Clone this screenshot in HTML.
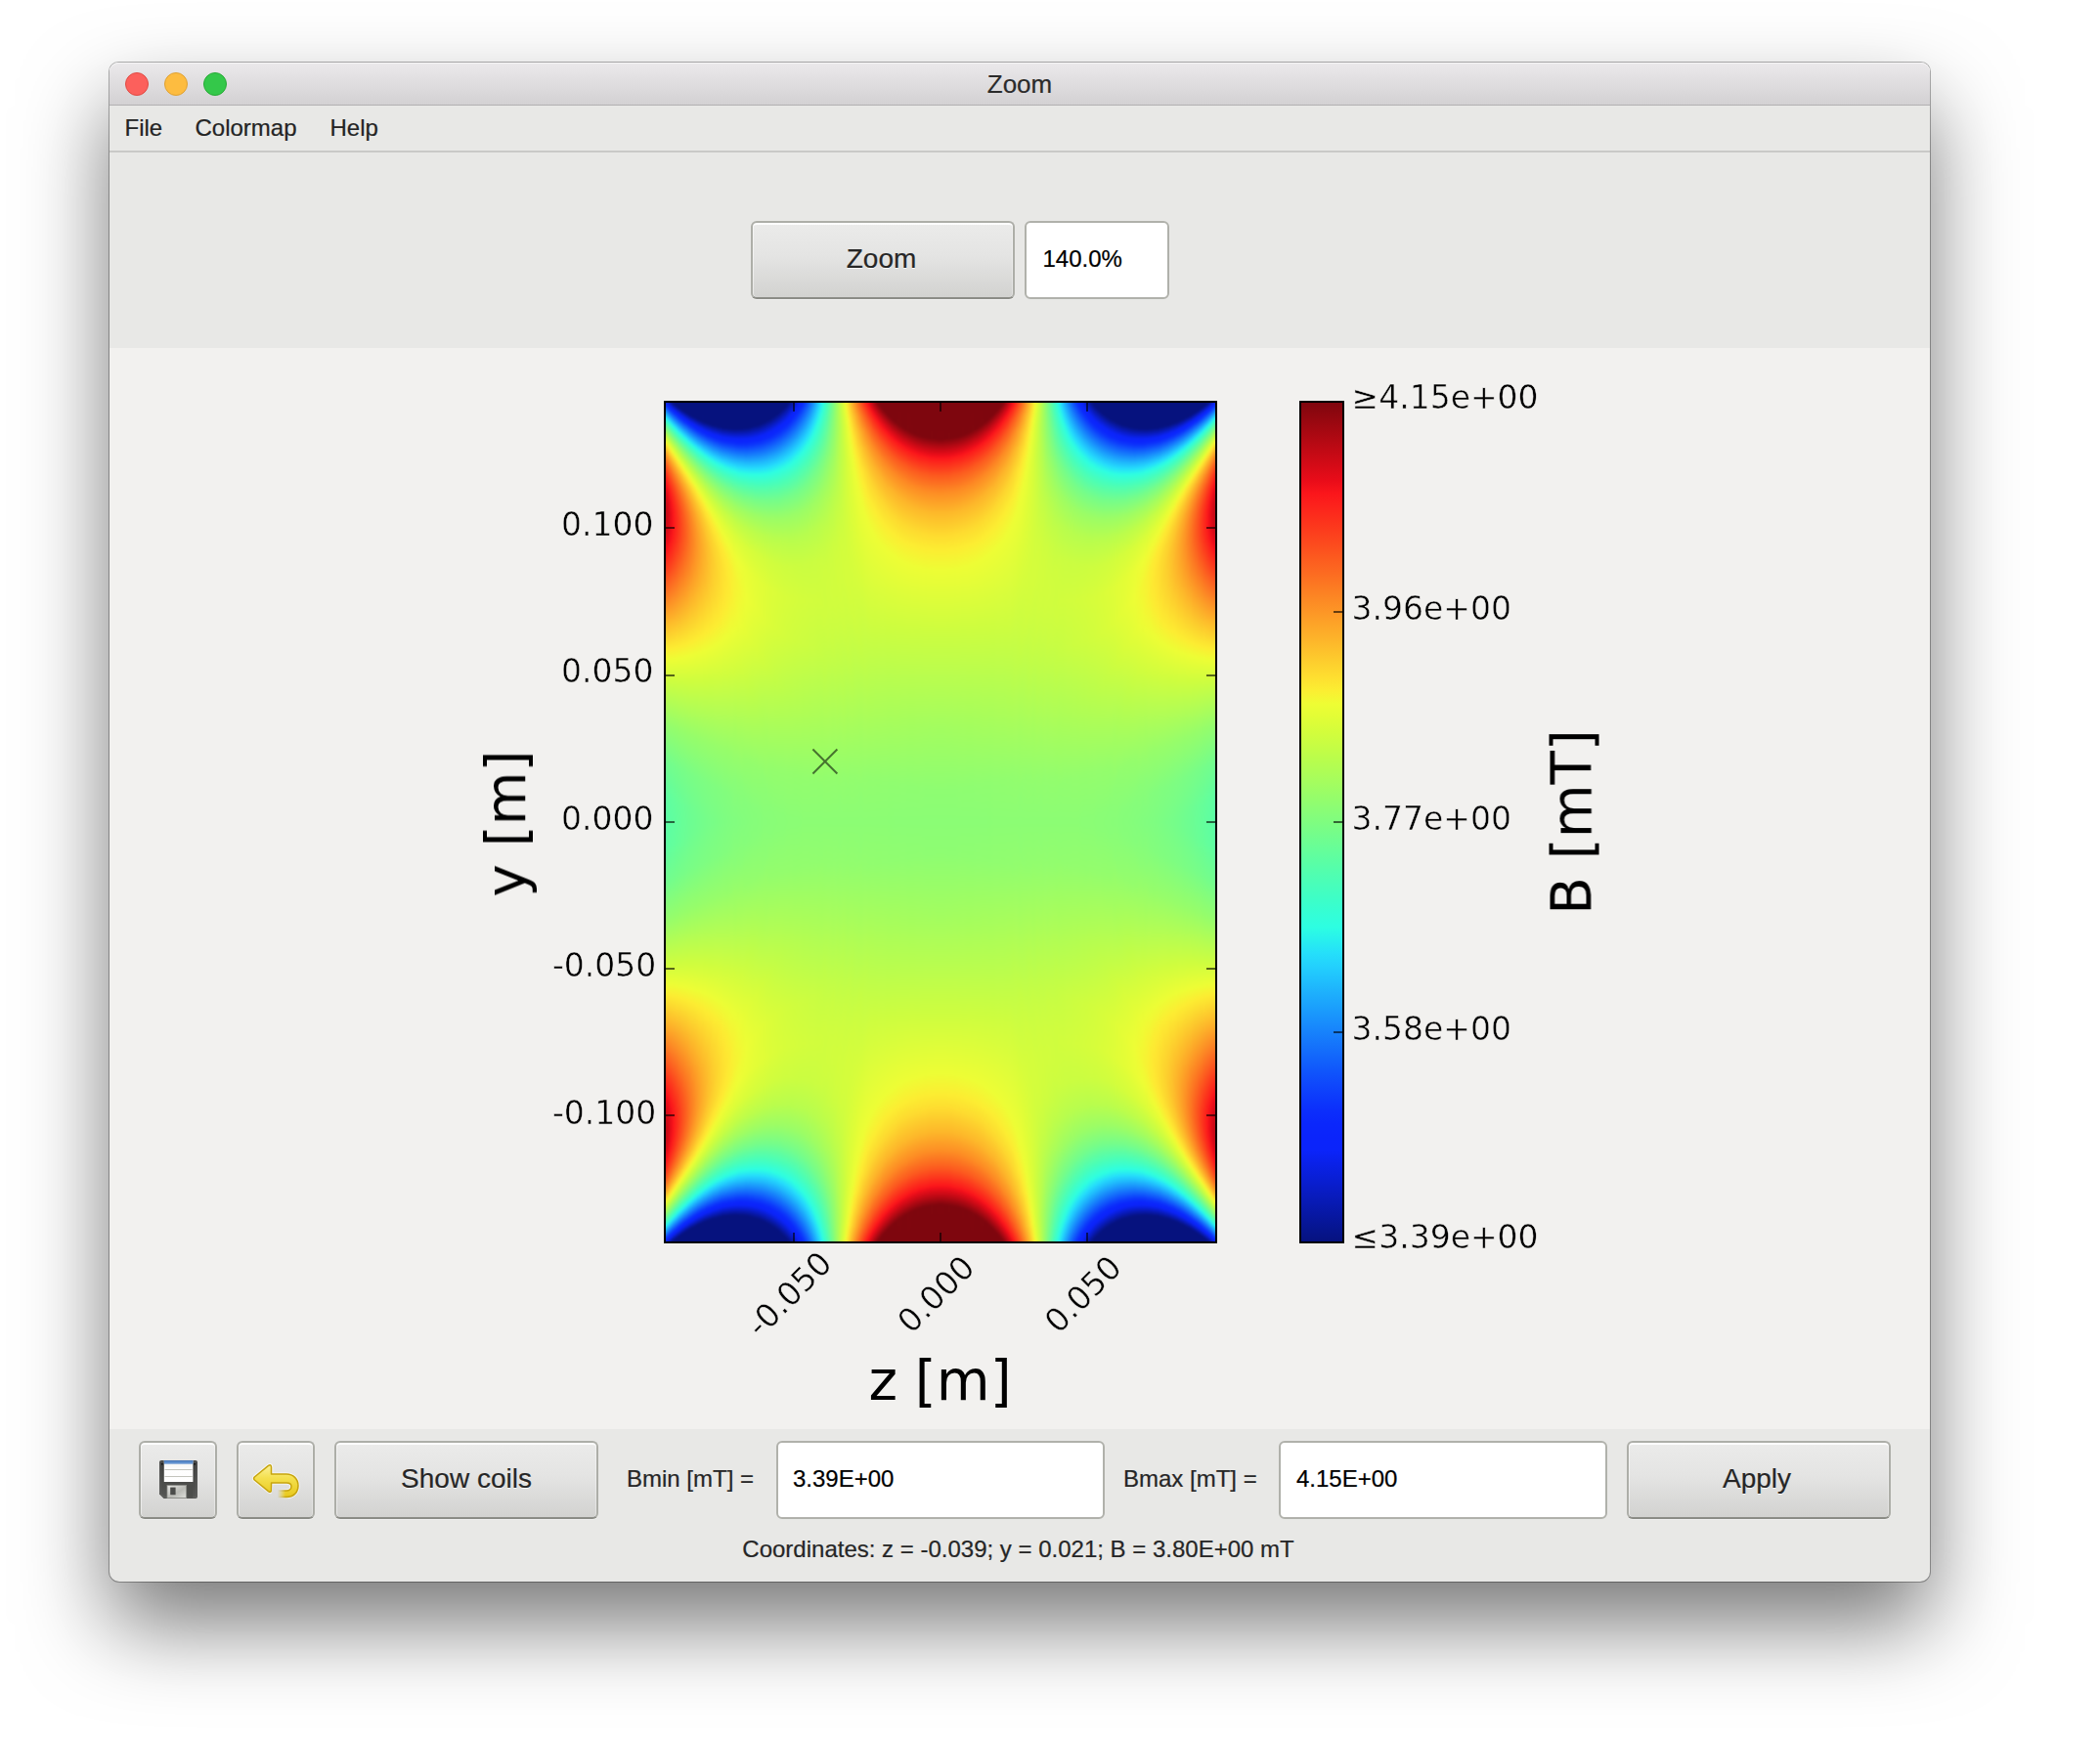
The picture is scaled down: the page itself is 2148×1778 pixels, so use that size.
<!DOCTYPE html><html><head><meta charset="utf-8"><title>Zoom</title><style>
html,body{margin:0;padding:0;background:#fff}
body{-webkit-text-stroke:.22px currentColor;width:2148px;height:1778px;position:relative;overflow:hidden;font-family:"Liberation Sans",sans-serif;color:#262626}
#win{position:absolute;left:112px;top:64px;width:1862px;height:1554px;border-radius:9px 9px 10px 10px;background:#e8e8e6;
 box-shadow:0 0 0 1px rgba(0,0,0,.3),0 44px 88px rgba(0,0,0,.53)}
#tb{position:absolute;left:0;top:0;width:1862px;height:43px;border-radius:9px 9px 0 0;background:linear-gradient(#ebe9eb,#d3d1d3);border-bottom:1px solid #b2b0b2;box-shadow:inset 0 1px 0 #f6f5f6}
#tb .t{position:absolute;left:0;width:1862px;top:7px;text-align:center;font-size:26px;line-height:30px;color:#2b2b2b}
.tl{position:absolute;top:10px;width:24px;height:24px;border-radius:50%;box-sizing:border-box}
#mb{position:absolute;left:0;top:44px;width:1862px;height:46px;background:#e8e8e6;border-bottom:2px solid #c9c9c7}
#mb span{position:absolute;top:8px;font-size:24px;line-height:30px;color:#242424}
#plotbg{position:absolute;left:0;top:292px;width:1862px;height:1106px;background:#f2f1ef}
.btn{position:absolute;box-sizing:border-box;border:2px solid #adaea8;border-bottom-color:#8b8c86;border-radius:6px;
 background:linear-gradient(#ebebea,#e4e4e3 45%,#d2d2d0);box-shadow:inset 0 2px 0 #fdfdfd,inset 1px 0 0 rgba(255,255,255,.5),inset -1px 0 0 rgba(255,255,255,.35),0 1px 0 rgba(255,255,255,.4);
 font-size:28px;text-align:center;color:#262626;text-shadow:0 1px 0 rgba(255,255,255,.9)}
.inp{position:absolute;box-sizing:border-box;border:2px solid #b0b1ab;border-radius:6px;background:#fff;font-size:24px;color:#000;padding-left:16px}
.lab{position:absolute;font-size:24px;line-height:30px;white-space:nowrap;color:#262626}
svg{position:absolute;overflow:visible}
</style></head><body>
<div id="win">
<div id="tb"><div class="tl" style="left:16px;background:#fc605c;border:1px solid #e04a43"></div><div class="tl" style="left:56px;background:#fdbc40;border:1px solid #dfa132"></div><div class="tl" style="left:96px;background:#34c84a;border:1px solid #27aa35"></div><div class="t">Zoom</div></div>
<div id="mb"><span style="left:15.500px">File</span><span style="left:87.500px">Colormap</span><span style="left:225.500px">Help</span></div>
<div id="plotbg"></div>
</div>
<div class="btn" style="left:768px;top:226px;width:270px;height:80px;line-height:73px;padding-right:3px">Zoom</div>
<div class="inp" style="left:1048px;top:226px;width:148px;height:80px;line-height:74px;padding-left:16.500px">140.0%</div>
<svg style="left:0;top:0" width="2148" height="1778" viewBox="0 0 2148 1778"><defs><linearGradient id="c0" x2="0" y2="1"><stop offset="0" stop-color="#0a21e6"/><stop offset="0.002" stop-color="#0b24fb"/><stop offset="0.006" stop-color="#0b26fb"/><stop offset="0.009" stop-color="#0c34fb"/><stop offset="0.034" stop-color="#24d6fd"/><stop offset="0.035" stop-color="#25defb"/><stop offset="0.04" stop-color="#2cfbe5"/><stop offset="0.041" stop-color="#2ffedf"/><stop offset="0.049" stop-color="#49feb9"/><stop offset="0.065" stop-color="#8afd76"/><stop offset="0.078" stop-color="#bafd4c"/><stop offset="0.087" stop-color="#dafd39"/><stop offset="0.093" stop-color="#eefd35"/><stop offset="0.099" stop-color="#fee832"/><stop offset="0.121" stop-color="#fda127"/><stop offset="0.144" stop-color="#fc6420"/><stop offset="0.167" stop-color="#fc351c"/><stop offset="0.188" stop-color="#fb161b"/><stop offset="0.201" stop-color="#e80c19"/><stop offset="0.226" stop-color="#cd0a16"/><stop offset="0.251" stop-color="#bf0a15"/><stop offset="0.279" stop-color="#bf0a15"/><stop offset="0.309" stop-color="#cd0a16"/><stop offset="0.347" stop-color="#ee0e1a"/><stop offset="0.362" stop-color="#fc181b"/><stop offset="0.435" stop-color="#fc601f"/><stop offset="0.527" stop-color="#fdb72a"/><stop offset="0.591" stop-color="#fced32"/><stop offset="0.614" stop-color="#edfd35"/><stop offset="0.662" stop-color="#cffd3f"/><stop offset="0.767" stop-color="#95fd6c"/><stop offset="0.856" stop-color="#72fd8e"/><stop offset="0.937" stop-color="#5ffea1"/><stop offset="1" stop-color="#5afea5"/></linearGradient><linearGradient id="c1" x2="0" y2="1"><stop offset="0" stop-color="#081bbe"/><stop offset="0.006" stop-color="#0b23f3"/><stop offset="0.007" stop-color="#0b24fb"/><stop offset="0.01" stop-color="#0b26fb"/><stop offset="0.014" stop-color="#0d35fb"/><stop offset="0.04" stop-color="#24dafd"/><stop offset="0.045" stop-color="#2dfde3"/><stop offset="0.052" stop-color="#41fec3"/><stop offset="0.07" stop-color="#84fd7c"/><stop offset="0.084" stop-color="#b7fd4e"/><stop offset="0.093" stop-color="#d7fd3a"/><stop offset="0.1" stop-color="#edfd35"/><stop offset="0.106" stop-color="#feea32"/><stop offset="0.128" stop-color="#fda528"/><stop offset="0.151" stop-color="#fc6a20"/><stop offset="0.176" stop-color="#fc3a1d"/><stop offset="0.199" stop-color="#fc1a1b"/><stop offset="0.203" stop-color="#fa151b"/><stop offset="0.219" stop-color="#e80c19"/><stop offset="0.244" stop-color="#d40b17"/><stop offset="0.271" stop-color="#cd0a16"/><stop offset="0.3" stop-color="#d50b17"/><stop offset="0.334" stop-color="#ec0d19"/><stop offset="0.352" stop-color="#fc171b"/><stop offset="0.407" stop-color="#fc491e"/><stop offset="0.513" stop-color="#fdad29"/><stop offset="0.59" stop-color="#fcec32"/><stop offset="0.614" stop-color="#ecfd35"/><stop offset="0.663" stop-color="#cefd3f"/><stop offset="0.77" stop-color="#95fd6c"/><stop offset="0.859" stop-color="#72fd8d"/><stop offset="0.941" stop-color="#60fea0"/><stop offset="1" stop-color="#5cfea4"/></linearGradient><linearGradient id="c2" x2="0" y2="1"><stop offset="0" stop-color="#071698"/><stop offset="0.01" stop-color="#0b23f6"/><stop offset="0.012" stop-color="#0b24fb"/><stop offset="0.015" stop-color="#0b27fb"/><stop offset="0.019" stop-color="#0d36fb"/><stop offset="0.044" stop-color="#24d8fd"/><stop offset="0.047" stop-color="#26e5f5"/><stop offset="0.051" stop-color="#2efee0"/><stop offset="0.059" stop-color="#46febc"/><stop offset="0.077" stop-color="#88fd78"/><stop offset="0.091" stop-color="#b9fd4d"/><stop offset="0.1" stop-color="#d7fd3a"/><stop offset="0.107" stop-color="#edfd35"/><stop offset="0.113" stop-color="#fdeb32"/><stop offset="0.135" stop-color="#fda828"/><stop offset="0.158" stop-color="#fc7021"/><stop offset="0.183" stop-color="#fc421d"/><stop offset="0.207" stop-color="#fc211b"/><stop offset="0.22" stop-color="#fb151b"/><stop offset="0.241" stop-color="#e80c19"/><stop offset="0.267" stop-color="#de0b18"/><stop offset="0.297" stop-color="#e10b18"/><stop offset="0.327" stop-color="#f2101a"/><stop offset="0.342" stop-color="#fc181b"/><stop offset="0.39" stop-color="#fc3e1d"/><stop offset="0.515" stop-color="#fdb129"/><stop offset="0.588" stop-color="#fcec32"/><stop offset="0.613" stop-color="#edfd35"/><stop offset="0.663" stop-color="#cefd3f"/><stop offset="0.772" stop-color="#95fd6c"/><stop offset="0.862" stop-color="#73fd8c"/><stop offset="0.943" stop-color="#61fe9e"/><stop offset="1" stop-color="#5efea2"/></linearGradient><linearGradient id="c3" x2="0" y2="1"><stop offset="0" stop-color="#06127e"/><stop offset="0.001" stop-color="#06127f"/><stop offset="0.015" stop-color="#0b24fb"/><stop offset="0.019" stop-color="#0b25fb"/><stop offset="0.022" stop-color="#0c31fb"/><stop offset="0.034" stop-color="#1578fc"/><stop offset="0.05" stop-color="#25dcfc"/><stop offset="0.056" stop-color="#2dfee3"/><stop offset="0.064" stop-color="#44febf"/><stop offset="0.083" stop-color="#87fd79"/><stop offset="0.097" stop-color="#b7fd4e"/><stop offset="0.107" stop-color="#d8fd3a"/><stop offset="0.114" stop-color="#edfd35"/><stop offset="0.12" stop-color="#fdec32"/><stop offset="0.143" stop-color="#fda928"/><stop offset="0.167" stop-color="#fc7021"/><stop offset="0.193" stop-color="#fc441d"/><stop offset="0.219" stop-color="#fc251c"/><stop offset="0.242" stop-color="#fa151b"/><stop offset="0.269" stop-color="#ee0e1a"/><stop offset="0.298" stop-color="#f00f1a"/><stop offset="0.327" stop-color="#fc181b"/><stop offset="0.369" stop-color="#fc331c"/><stop offset="0.529" stop-color="#fdbf2b"/><stop offset="0.587" stop-color="#fcec32"/><stop offset="0.613" stop-color="#edfd35"/><stop offset="0.664" stop-color="#cefd3f"/><stop offset="0.774" stop-color="#95fd6c"/><stop offset="0.864" stop-color="#74fd8c"/><stop offset="0.945" stop-color="#63fe9d"/><stop offset="1" stop-color="#5ffea0"/></linearGradient><linearGradient id="c4" x2="0" y2="1"><stop offset="0" stop-color="#06127e"/><stop offset="0.005" stop-color="#06127e"/><stop offset="0.019" stop-color="#0b23f6"/><stop offset="0.02" stop-color="#0b24fb"/><stop offset="0.023" stop-color="#0b26fb"/><stop offset="0.027" stop-color="#0c33fb"/><stop offset="0.055" stop-color="#24dbfd"/><stop offset="0.06" stop-color="#2cfbe4"/><stop offset="0.063" stop-color="#31feda"/><stop offset="0.073" stop-color="#51feaf"/><stop offset="0.092" stop-color="#93fd6d"/><stop offset="0.106" stop-color="#c1fd47"/><stop offset="0.116" stop-color="#e0fd37"/><stop offset="0.121" stop-color="#edfd35"/><stop offset="0.128" stop-color="#fee932"/><stop offset="0.151" stop-color="#fda928"/><stop offset="0.176" stop-color="#fc7421"/><stop offset="0.201" stop-color="#fc4a1e"/><stop offset="0.228" stop-color="#fc2c1c"/><stop offset="0.256" stop-color="#fc1b1b"/><stop offset="0.288" stop-color="#fc171b"/><stop offset="0.324" stop-color="#fc201b"/><stop offset="0.369" stop-color="#fc3b1d"/><stop offset="0.54" stop-color="#fdc92d"/><stop offset="0.586" stop-color="#fcec32"/><stop offset="0.613" stop-color="#ecfd35"/><stop offset="0.664" stop-color="#cefd3f"/><stop offset="0.776" stop-color="#95fd6b"/><stop offset="0.866" stop-color="#74fd8b"/><stop offset="0.948" stop-color="#64fe9c"/><stop offset="1" stop-color="#61fe9f"/></linearGradient><linearGradient id="c5" x2="0" y2="1"><stop offset="0" stop-color="#06127e"/><stop offset="0.008" stop-color="#06127e"/><stop offset="0.023" stop-color="#0b24fb"/><stop offset="0.027" stop-color="#0b25fb"/><stop offset="0.03" stop-color="#0c31fb"/><stop offset="0.041" stop-color="#146dfb"/><stop offset="0.059" stop-color="#24dafd"/><stop offset="0.066" stop-color="#2efee0"/><stop offset="0.076" stop-color="#47febb"/><stop offset="0.094" stop-color="#87fd78"/><stop offset="0.109" stop-color="#b8fd4e"/><stop offset="0.12" stop-color="#d7fd3a"/><stop offset="0.128" stop-color="#edfd35"/><stop offset="0.135" stop-color="#fee932"/><stop offset="0.158" stop-color="#fdac29"/><stop offset="0.183" stop-color="#fc7922"/><stop offset="0.208" stop-color="#fc521e"/><stop offset="0.235" stop-color="#fc361c"/><stop offset="0.264" stop-color="#fc261c"/><stop offset="0.297" stop-color="#fc221c"/><stop offset="0.334" stop-color="#fc2e1c"/><stop offset="0.384" stop-color="#fc4e1e"/><stop offset="0.547" stop-color="#fdd02e"/><stop offset="0.585" stop-color="#fcec32"/><stop offset="0.612" stop-color="#edfd35"/><stop offset="0.664" stop-color="#cefd3f"/><stop offset="0.778" stop-color="#95fd6b"/><stop offset="0.869" stop-color="#75fd8a"/><stop offset="0.951" stop-color="#65fe9a"/><stop offset="1" stop-color="#62fe9d"/></linearGradient><linearGradient id="c6" x2="0" y2="1"><stop offset="0" stop-color="#06127e"/><stop offset="0.012" stop-color="#06127e"/><stop offset="0.027" stop-color="#0b24f9"/><stop offset="0.031" stop-color="#0b27fb"/><stop offset="0.036" stop-color="#0d3afb"/><stop offset="0.064" stop-color="#24dafd"/><stop offset="0.071" stop-color="#2efee1"/><stop offset="0.08" stop-color="#46febc"/><stop offset="0.1" stop-color="#88fd78"/><stop offset="0.115" stop-color="#b7fd4e"/><stop offset="0.127" stop-color="#d8fd3a"/><stop offset="0.135" stop-color="#edfd35"/><stop offset="0.142" stop-color="#feea32"/><stop offset="0.166" stop-color="#fdad29"/><stop offset="0.192" stop-color="#fc7b22"/><stop offset="0.219" stop-color="#fc551f"/><stop offset="0.247" stop-color="#fc3c1d"/><stop offset="0.277" stop-color="#fc2f1c"/><stop offset="0.31" stop-color="#fc301c"/><stop offset="0.351" stop-color="#fc401d"/><stop offset="0.415" stop-color="#fc6d21"/><stop offset="0.56" stop-color="#fddc30"/><stop offset="0.584" stop-color="#fcec32"/><stop offset="0.61" stop-color="#edfd35"/><stop offset="0.664" stop-color="#cffd3f"/><stop offset="0.78" stop-color="#95fd6b"/><stop offset="0.872" stop-color="#75fd8a"/><stop offset="0.955" stop-color="#66fe99"/><stop offset="1" stop-color="#64fe9c"/></linearGradient><linearGradient id="c7" x2="0" y2="1"><stop offset="0" stop-color="#06127e"/><stop offset="0.015" stop-color="#06127e"/><stop offset="0.03" stop-color="#0b24f8"/><stop offset="0.033" stop-color="#0b24fb"/><stop offset="0.036" stop-color="#0b29fb"/><stop offset="0.042" stop-color="#0e44fb"/><stop offset="0.069" stop-color="#24dbfd"/><stop offset="0.076" stop-color="#2efee2"/><stop offset="0.085" stop-color="#45febe"/><stop offset="0.105" stop-color="#85fd7b"/><stop offset="0.121" stop-color="#b6fd4f"/><stop offset="0.133" stop-color="#d6fd3b"/><stop offset="0.142" stop-color="#eefd35"/><stop offset="0.149" stop-color="#feea32"/><stop offset="0.173" stop-color="#fdb029"/><stop offset="0.199" stop-color="#fc8123"/><stop offset="0.226" stop-color="#fc5d1f"/><stop offset="0.253" stop-color="#fc461d"/><stop offset="0.284" stop-color="#fc3b1d"/><stop offset="0.319" stop-color="#fc3c1d"/><stop offset="0.362" stop-color="#fc4f1e"/><stop offset="0.438" stop-color="#fc8423"/><stop offset="0.583" stop-color="#fcec32"/><stop offset="0.61" stop-color="#ecfd35"/><stop offset="0.665" stop-color="#cefd3f"/><stop offset="0.783" stop-color="#95fd6b"/><stop offset="0.874" stop-color="#76fd89"/><stop offset="0.957" stop-color="#67fe98"/><stop offset="1" stop-color="#65fe9a"/></linearGradient><linearGradient id="c8" x2="0" y2="1"><stop offset="0" stop-color="#06127e"/><stop offset="0.019" stop-color="#06127e"/><stop offset="0.034" stop-color="#0b23f7"/><stop offset="0.035" stop-color="#0b24fb"/><stop offset="0.038" stop-color="#0b26fb"/><stop offset="0.043" stop-color="#0d36fb"/><stop offset="0.073" stop-color="#25dcfd"/><stop offset="0.08" stop-color="#2efee2"/><stop offset="0.09" stop-color="#44febe"/><stop offset="0.109" stop-color="#83fd7d"/><stop offset="0.127" stop-color="#b6fd50"/><stop offset="0.14" stop-color="#d7fd3a"/><stop offset="0.149" stop-color="#eefd35"/><stop offset="0.156" stop-color="#fdeb32"/><stop offset="0.18" stop-color="#fdb32a"/><stop offset="0.206" stop-color="#fc8724"/><stop offset="0.233" stop-color="#fc6520"/><stop offset="0.262" stop-color="#fc4f1e"/><stop offset="0.293" stop-color="#fc461d"/><stop offset="0.329" stop-color="#fc4a1e"/><stop offset="0.376" stop-color="#fc5f1f"/><stop offset="0.581" stop-color="#fcec32"/><stop offset="0.609" stop-color="#edfd35"/><stop offset="0.665" stop-color="#cefd3f"/><stop offset="0.784" stop-color="#96fd6b"/><stop offset="0.876" stop-color="#77fd88"/><stop offset="0.958" stop-color="#68fe97"/><stop offset="1" stop-color="#67fe99"/></linearGradient><linearGradient id="c9" x2="0" y2="1"><stop offset="0" stop-color="#06127e"/><stop offset="0.021" stop-color="#06127e"/><stop offset="0.022" stop-color="#061280"/><stop offset="0.037" stop-color="#0b23f7"/><stop offset="0.038" stop-color="#0b24fb"/><stop offset="0.042" stop-color="#0b25fb"/><stop offset="0.047" stop-color="#0d35fb"/><stop offset="0.078" stop-color="#25ddfc"/><stop offset="0.085" stop-color="#2efee1"/><stop offset="0.094" stop-color="#44febf"/><stop offset="0.115" stop-color="#84fd7c"/><stop offset="0.133" stop-color="#b5fd50"/><stop offset="0.145" stop-color="#d6fd3b"/><stop offset="0.156" stop-color="#eefd34"/><stop offset="0.164" stop-color="#fee932"/><stop offset="0.19" stop-color="#fdb229"/><stop offset="0.216" stop-color="#fc8824"/><stop offset="0.244" stop-color="#fc6920"/><stop offset="0.274" stop-color="#fc571f"/><stop offset="0.308" stop-color="#fc511e"/><stop offset="0.348" stop-color="#fc5a1f"/><stop offset="0.405" stop-color="#fc7822"/><stop offset="0.579" stop-color="#fcec32"/><stop offset="0.608" stop-color="#edfd35"/><stop offset="0.665" stop-color="#cefd3f"/><stop offset="0.786" stop-color="#96fd6b"/><stop offset="0.879" stop-color="#77fd88"/><stop offset="0.963" stop-color="#69fe96"/><stop offset="1" stop-color="#68fe97"/></linearGradient><linearGradient id="c10" x2="0" y2="1"><stop offset="0" stop-color="#06127e"/><stop offset="0.024" stop-color="#06127e"/><stop offset="0.027" stop-color="#06148d"/><stop offset="0.041" stop-color="#0b24f8"/><stop offset="0.043" stop-color="#0b24fb"/><stop offset="0.047" stop-color="#0b28fb"/><stop offset="0.052" stop-color="#0e40fb"/><stop offset="0.081" stop-color="#24d9fd"/><stop offset="0.088" stop-color="#2cfbe5"/><stop offset="0.091" stop-color="#30fedc"/><stop offset="0.103" stop-color="#51feaf"/><stop offset="0.124" stop-color="#8ffd71"/><stop offset="0.142" stop-color="#befd49"/><stop offset="0.155" stop-color="#dcfd38"/><stop offset="0.163" stop-color="#eefd34"/><stop offset="0.171" stop-color="#feea32"/><stop offset="0.197" stop-color="#fdb62a"/><stop offset="0.223" stop-color="#fd8e25"/><stop offset="0.252" stop-color="#fc7121"/><stop offset="0.284" stop-color="#fc601f"/><stop offset="0.319" stop-color="#fc5c1f"/><stop offset="0.362" stop-color="#fc6820"/><stop offset="0.429" stop-color="#fd8d24"/><stop offset="0.578" stop-color="#fcec32"/><stop offset="0.607" stop-color="#edfd35"/><stop offset="0.664" stop-color="#cffd3e"/><stop offset="0.787" stop-color="#96fd6a"/><stop offset="0.88" stop-color="#78fd87"/><stop offset="0.964" stop-color="#6bfd95"/><stop offset="1" stop-color="#69fe96"/></linearGradient><linearGradient id="c11" x2="0" y2="1"><stop offset="0" stop-color="#06127e"/><stop offset="0.028" stop-color="#06127f"/><stop offset="0.044" stop-color="#0b24fa"/><stop offset="0.049" stop-color="#0b26fb"/><stop offset="0.053" stop-color="#0d35fb"/><stop offset="0.086" stop-color="#25dcfd"/><stop offset="0.093" stop-color="#2dfce3"/><stop offset="0.103" stop-color="#44febf"/><stop offset="0.124" stop-color="#80fd7f"/><stop offset="0.143" stop-color="#b2fd53"/><stop offset="0.157" stop-color="#d3fd3c"/><stop offset="0.17" stop-color="#eefd34"/><stop offset="0.179" stop-color="#fee832"/><stop offset="0.206" stop-color="#fdb62a"/><stop offset="0.234" stop-color="#fd9025"/><stop offset="0.263" stop-color="#fc7722"/><stop offset="0.295" stop-color="#fc6920"/><stop offset="0.333" stop-color="#fc6820"/><stop offset="0.38" stop-color="#fc7822"/><stop offset="0.47" stop-color="#fdaa28"/><stop offset="0.576" stop-color="#fcec32"/><stop offset="0.606" stop-color="#edfd35"/><stop offset="0.664" stop-color="#cffd3e"/><stop offset="0.79" stop-color="#96fd6a"/><stop offset="0.884" stop-color="#79fd87"/><stop offset="0.967" stop-color="#6cfd94"/><stop offset="1" stop-color="#6bfd95"/></linearGradient><linearGradient id="c12" x2="0" y2="1"><stop offset="0" stop-color="#06127e"/><stop offset="0.03" stop-color="#06127e"/><stop offset="0.033" stop-color="#06148d"/><stop offset="0.047" stop-color="#0b23f4"/><stop offset="0.048" stop-color="#0b24fb"/><stop offset="0.052" stop-color="#0b26fb"/><stop offset="0.057" stop-color="#0d36fb"/><stop offset="0.09" stop-color="#24d9fd"/><stop offset="0.098" stop-color="#2dfee2"/><stop offset="0.108" stop-color="#44febe"/><stop offset="0.13" stop-color="#82fd7d"/><stop offset="0.149" stop-color="#b2fd53"/><stop offset="0.164" stop-color="#d4fd3c"/><stop offset="0.177" stop-color="#eefd35"/><stop offset="0.186" stop-color="#feea32"/><stop offset="0.213" stop-color="#fdba2b"/><stop offset="0.241" stop-color="#fd9726"/><stop offset="0.271" stop-color="#fc7f23"/><stop offset="0.305" stop-color="#fc7321"/><stop offset="0.344" stop-color="#fc7422"/><stop offset="0.397" stop-color="#fc8624"/><stop offset="0.515" stop-color="#fdc92d"/><stop offset="0.574" stop-color="#fced32"/><stop offset="0.605" stop-color="#edfd35"/><stop offset="0.664" stop-color="#cffd3e"/><stop offset="0.792" stop-color="#96fd6a"/><stop offset="0.886" stop-color="#79fd86"/><stop offset="0.97" stop-color="#6dfd92"/><stop offset="1" stop-color="#6cfd93"/></linearGradient><linearGradient id="c13" x2="0" y2="1"><stop offset="0" stop-color="#06127e"/><stop offset="0.033" stop-color="#06127e"/><stop offset="0.034" stop-color="#061280"/><stop offset="0.05" stop-color="#0b23f7"/><stop offset="0.051" stop-color="#0b24fb"/><stop offset="0.056" stop-color="#0b27fb"/><stop offset="0.06" stop-color="#0d37fb"/><stop offset="0.093" stop-color="#24d7fd"/><stop offset="0.095" stop-color="#25e2f8"/><stop offset="0.101" stop-color="#2cfbe4"/><stop offset="0.103" stop-color="#30fedc"/><stop offset="0.116" stop-color="#4efeb3"/><stop offset="0.138" stop-color="#8afd76"/><stop offset="0.157" stop-color="#b7fd4e"/><stop offset="0.172" stop-color="#d7fd3a"/><stop offset="0.184" stop-color="#eefd35"/><stop offset="0.194" stop-color="#fee932"/><stop offset="0.221" stop-color="#fdbd2b"/><stop offset="0.25" stop-color="#fd9b26"/><stop offset="0.281" stop-color="#fc8524"/><stop offset="0.316" stop-color="#fc7c22"/><stop offset="0.358" stop-color="#fc8023"/><stop offset="0.417" stop-color="#fd9626"/><stop offset="0.572" stop-color="#fcec32"/><stop offset="0.603" stop-color="#edfd35"/><stop offset="0.664" stop-color="#cffd3e"/><stop offset="0.793" stop-color="#97fd6a"/><stop offset="0.887" stop-color="#7afd85"/><stop offset="0.972" stop-color="#6efd91"/><stop offset="1" stop-color="#6dfd92"/></linearGradient><linearGradient id="c14" x2="0" y2="1"><stop offset="0" stop-color="#06127e"/><stop offset="0.036" stop-color="#06127e"/><stop offset="0.053" stop-color="#0b24fb"/><stop offset="0.058" stop-color="#0b26fb"/><stop offset="0.063" stop-color="#0c34fb"/><stop offset="0.098" stop-color="#24dbfd"/><stop offset="0.106" stop-color="#2dfee2"/><stop offset="0.116" stop-color="#43fec0"/><stop offset="0.138" stop-color="#7dfd82"/><stop offset="0.159" stop-color="#affd55"/><stop offset="0.176" stop-color="#d1fd3d"/><stop offset="0.191" stop-color="#edfd35"/><stop offset="0.202" stop-color="#fee832"/><stop offset="0.23" stop-color="#fdbe2b"/><stop offset="0.26" stop-color="#fd9f27"/><stop offset="0.293" stop-color="#fd8c24"/><stop offset="0.33" stop-color="#fc8523"/><stop offset="0.377" stop-color="#fd8c24"/><stop offset="0.448" stop-color="#fdaa28"/><stop offset="0.57" stop-color="#fcec32"/><stop offset="0.602" stop-color="#edfd35"/><stop offset="0.664" stop-color="#cffd3e"/><stop offset="0.795" stop-color="#97fd6a"/><stop offset="0.891" stop-color="#7afd85"/><stop offset="0.976" stop-color="#6ffd90"/><stop offset="1" stop-color="#6efd91"/></linearGradient><linearGradient id="c15" x2="0" y2="1"><stop offset="0" stop-color="#06127e"/><stop offset="0.038" stop-color="#06127e"/><stop offset="0.056" stop-color="#0b24f7"/><stop offset="0.058" stop-color="#0b24fb"/><stop offset="0.062" stop-color="#0b27fb"/><stop offset="0.067" stop-color="#0d3afb"/><stop offset="0.099" stop-color="#23cffd"/><stop offset="0.102" stop-color="#25defb"/><stop offset="0.109" stop-color="#2cfce4"/><stop offset="0.113" stop-color="#32fed9"/><stop offset="0.131" stop-color="#5efea1"/><stop offset="0.153" stop-color="#95fd6b"/><stop offset="0.172" stop-color="#befd49"/><stop offset="0.188" stop-color="#ddfd38"/><stop offset="0.199" stop-color="#eefd34"/><stop offset="0.21" stop-color="#fee832"/><stop offset="0.24" stop-color="#fdc02b"/><stop offset="0.27" stop-color="#fda427"/><stop offset="0.303" stop-color="#fd9325"/><stop offset="0.343" stop-color="#fd8e25"/><stop offset="0.393" stop-color="#fd9826"/><stop offset="0.476" stop-color="#fdbc2b"/><stop offset="0.567" stop-color="#fcec32"/><stop offset="0.601" stop-color="#ecfd35"/><stop offset="0.664" stop-color="#cffd3e"/><stop offset="0.798" stop-color="#96fd6a"/><stop offset="0.893" stop-color="#7bfd84"/><stop offset="0.978" stop-color="#70fd8f"/><stop offset="1" stop-color="#6ffd90"/></linearGradient><linearGradient id="c16" x2="0" y2="1"><stop offset="0" stop-color="#06127e"/><stop offset="0.041" stop-color="#06127e"/><stop offset="0.058" stop-color="#0b23f5"/><stop offset="0.059" stop-color="#0b24fb"/><stop offset="0.064" stop-color="#0b26fb"/><stop offset="0.069" stop-color="#0c33fb"/><stop offset="0.105" stop-color="#24d9fd"/><stop offset="0.113" stop-color="#2cfae5"/><stop offset="0.114" stop-color="#2efee1"/><stop offset="0.126" stop-color="#45febe"/><stop offset="0.149" stop-color="#7ffd81"/><stop offset="0.17" stop-color="#adfd56"/><stop offset="0.187" stop-color="#cffd3e"/><stop offset="0.203" stop-color="#eafd35"/><stop offset="0.207" stop-color="#effb34"/><stop offset="0.219" stop-color="#fee932"/><stop offset="0.248" stop-color="#fdc32c"/><stop offset="0.279" stop-color="#fda928"/><stop offset="0.314" stop-color="#fd9a26"/><stop offset="0.356" stop-color="#fd9726"/><stop offset="0.412" stop-color="#fda427"/><stop offset="0.507" stop-color="#fdce2e"/><stop offset="0.565" stop-color="#fced32"/><stop offset="0.6" stop-color="#ecfd35"/><stop offset="0.665" stop-color="#cefd3f"/><stop offset="0.8" stop-color="#96fd6a"/><stop offset="0.895" stop-color="#7bfd84"/><stop offset="0.98" stop-color="#71fd8e"/><stop offset="1" stop-color="#70fd8f"/></linearGradient><linearGradient id="c17" x2="0" y2="1"><stop offset="0" stop-color="#06127e"/><stop offset="0.043" stop-color="#06127e"/><stop offset="0.062" stop-color="#0b24fb"/><stop offset="0.067" stop-color="#0b27fb"/><stop offset="0.073" stop-color="#0d3bfb"/><stop offset="0.106" stop-color="#22cffd"/><stop offset="0.109" stop-color="#25ddfc"/><stop offset="0.117" stop-color="#2dfee2"/><stop offset="0.129" stop-color="#43fec0"/><stop offset="0.153" stop-color="#7efd81"/><stop offset="0.176" stop-color="#aefd56"/><stop offset="0.194" stop-color="#d0fd3e"/><stop offset="0.212" stop-color="#ebfd35"/><stop offset="0.217" stop-color="#f3f733"/><stop offset="0.227" stop-color="#fee932"/><stop offset="0.257" stop-color="#fdc52c"/><stop offset="0.29" stop-color="#fdad29"/><stop offset="0.327" stop-color="#fda027"/><stop offset="0.372" stop-color="#fda027"/><stop offset="0.435" stop-color="#fdb229"/><stop offset="0.545" stop-color="#fee431"/><stop offset="0.564" stop-color="#fbed32"/><stop offset="0.598" stop-color="#edfd35"/><stop offset="0.663" stop-color="#cffd3e"/><stop offset="0.801" stop-color="#97fd6a"/><stop offset="0.897" stop-color="#7cfd83"/><stop offset="0.981" stop-color="#72fd8d"/><stop offset="1" stop-color="#72fd8e"/></linearGradient><linearGradient id="c18" x2="0" y2="1"><stop offset="0" stop-color="#06127e"/><stop offset="0.045" stop-color="#06127e"/><stop offset="0.064" stop-color="#0b24fa"/><stop offset="0.07" stop-color="#0b27fb"/><stop offset="0.076" stop-color="#0d39fb"/><stop offset="0.109" stop-color="#23cffd"/><stop offset="0.113" stop-color="#25ddfc"/><stop offset="0.121" stop-color="#2dfde3"/><stop offset="0.134" stop-color="#45febe"/><stop offset="0.158" stop-color="#7efd81"/><stop offset="0.18" stop-color="#acfd57"/><stop offset="0.2" stop-color="#cffd3e"/><stop offset="0.219" stop-color="#ebfd35"/><stop offset="0.223" stop-color="#f1fa34"/><stop offset="0.236" stop-color="#fee832"/><stop offset="0.267" stop-color="#fdc72c"/><stop offset="0.302" stop-color="#fdb129"/><stop offset="0.342" stop-color="#fda728"/><stop offset="0.391" stop-color="#fdaa28"/><stop offset="0.462" stop-color="#fdc02b"/><stop offset="0.559" stop-color="#fcec32"/><stop offset="0.597" stop-color="#ecfd35"/><stop offset="0.664" stop-color="#cffd3f"/><stop offset="0.803" stop-color="#97fd6a"/><stop offset="0.9" stop-color="#7dfd83"/><stop offset="0.986" stop-color="#73fd8c"/><stop offset="1" stop-color="#73fd8c"/></linearGradient><linearGradient id="c19" x2="0" y2="1"><stop offset="0" stop-color="#06127e"/><stop offset="0.048" stop-color="#06127f"/><stop offset="0.066" stop-color="#0b24f9"/><stop offset="0.072" stop-color="#0b26fb"/><stop offset="0.078" stop-color="#0d38fb"/><stop offset="0.112" stop-color="#22cbfd"/><stop offset="0.116" stop-color="#25defb"/><stop offset="0.124" stop-color="#2dfde3"/><stop offset="0.137" stop-color="#44febf"/><stop offset="0.162" stop-color="#7cfd84"/><stop offset="0.185" stop-color="#abfd59"/><stop offset="0.205" stop-color="#ccfd40"/><stop offset="0.223" stop-color="#e7fd35"/><stop offset="0.23" stop-color="#f0fb34"/><stop offset="0.244" stop-color="#fee932"/><stop offset="0.277" stop-color="#fdca2d"/><stop offset="0.313" stop-color="#fdb52a"/><stop offset="0.355" stop-color="#fdad29"/><stop offset="0.408" stop-color="#fdb32a"/><stop offset="0.486" stop-color="#fdcd2d"/><stop offset="0.557" stop-color="#fced32"/><stop offset="0.594" stop-color="#ecfd35"/><stop offset="0.663" stop-color="#cffd3e"/><stop offset="0.806" stop-color="#97fd6a"/><stop offset="0.902" stop-color="#7dfd82"/><stop offset="0.988" stop-color="#74fd8b"/><stop offset="1" stop-color="#74fd8b"/></linearGradient><linearGradient id="c20" x2="0" y2="1"><stop offset="0" stop-color="#06127e"/><stop offset="0.049" stop-color="#06127e"/><stop offset="0.05" stop-color="#061382"/><stop offset="0.069" stop-color="#0b24fa"/><stop offset="0.074" stop-color="#0b26fb"/><stop offset="0.08" stop-color="#0d38fb"/><stop offset="0.115" stop-color="#22cdfd"/><stop offset="0.119" stop-color="#24dafd"/><stop offset="0.128" stop-color="#2dfde3"/><stop offset="0.141" stop-color="#43febf"/><stop offset="0.166" stop-color="#7cfd83"/><stop offset="0.19" stop-color="#a9fd5a"/><stop offset="0.21" stop-color="#ccfd40"/><stop offset="0.23" stop-color="#e6fd35"/><stop offset="0.238" stop-color="#f0fb34"/><stop offset="0.253" stop-color="#fee932"/><stop offset="0.287" stop-color="#fdcc2d"/><stop offset="0.324" stop-color="#fdba2b"/><stop offset="0.369" stop-color="#fdb42a"/><stop offset="0.427" stop-color="#fdbc2b"/><stop offset="0.513" stop-color="#fddb2f"/><stop offset="0.553" stop-color="#fced32"/><stop offset="0.592" stop-color="#edfd35"/><stop offset="0.662" stop-color="#cffd3e"/><stop offset="0.807" stop-color="#97fd6a"/><stop offset="0.903" stop-color="#7efd82"/><stop offset="0.99" stop-color="#75fd8a"/><stop offset="1" stop-color="#75fd8a"/></linearGradient><linearGradient id="c21" x2="0" y2="1"><stop offset="0" stop-color="#06127e"/><stop offset="0.051" stop-color="#06127e"/><stop offset="0.071" stop-color="#0b24fb"/><stop offset="0.077" stop-color="#0b26fb"/><stop offset="0.083" stop-color="#0d37fb"/><stop offset="0.117" stop-color="#22cafd"/><stop offset="0.122" stop-color="#24dcfd"/><stop offset="0.131" stop-color="#2dfee2"/><stop offset="0.145" stop-color="#46febd"/><stop offset="0.171" stop-color="#7cfd83"/><stop offset="0.195" stop-color="#aafd59"/><stop offset="0.217" stop-color="#cdfd40"/><stop offset="0.238" stop-color="#e7fd35"/><stop offset="0.247" stop-color="#f0fb34"/><stop offset="0.263" stop-color="#fee932"/><stop offset="0.298" stop-color="#fdce2d"/><stop offset="0.337" stop-color="#fdbe2b"/><stop offset="0.385" stop-color="#fdba2b"/><stop offset="0.448" stop-color="#fdc62c"/><stop offset="0.543" stop-color="#feea32"/><stop offset="0.591" stop-color="#ecfd35"/><stop offset="0.662" stop-color="#cffd3e"/><stop offset="0.809" stop-color="#97fd6a"/><stop offset="0.907" stop-color="#7efd81"/><stop offset="0.993" stop-color="#76fd89"/><stop offset="1" stop-color="#76fd89"/></linearGradient><linearGradient id="c22" x2="0" y2="1"><stop offset="0" stop-color="#06127e"/><stop offset="0.052" stop-color="#06127e"/><stop offset="0.053" stop-color="#061381"/><stop offset="0.072" stop-color="#0b23f6"/><stop offset="0.073" stop-color="#0b24fb"/><stop offset="0.079" stop-color="#0b27fb"/><stop offset="0.085" stop-color="#0d38fb"/><stop offset="0.12" stop-color="#21c8fd"/><stop offset="0.126" stop-color="#25ddfc"/><stop offset="0.135" stop-color="#2efee2"/><stop offset="0.149" stop-color="#45febd"/><stop offset="0.174" stop-color="#7bfd85"/><stop offset="0.2" stop-color="#a9fd5a"/><stop offset="0.223" stop-color="#ccfd40"/><stop offset="0.245" stop-color="#e7fd35"/><stop offset="0.253" stop-color="#effc34"/><stop offset="0.272" stop-color="#fee932"/><stop offset="0.308" stop-color="#fdd02e"/><stop offset="0.35" stop-color="#fdc22c"/><stop offset="0.401" stop-color="#fdc12c"/><stop offset="0.47" stop-color="#fdd02e"/><stop offset="0.547" stop-color="#fced32"/><stop offset="0.588" stop-color="#ecfd35"/><stop offset="0.66" stop-color="#cffd3e"/><stop offset="0.812" stop-color="#97fd6a"/><stop offset="0.909" stop-color="#7efd81"/><stop offset="0.995" stop-color="#77fd89"/><stop offset="1" stop-color="#77fd89"/></linearGradient><linearGradient id="c23" x2="0" y2="1"><stop offset="0" stop-color="#06127e"/><stop offset="0.055" stop-color="#06127e"/><stop offset="0.074" stop-color="#0b24f8"/><stop offset="0.077" stop-color="#0b24fb"/><stop offset="0.081" stop-color="#0b27fb"/><stop offset="0.088" stop-color="#0d3dfb"/><stop offset="0.122" stop-color="#21c6fd"/><stop offset="0.128" stop-color="#24dbfd"/><stop offset="0.138" stop-color="#2efee1"/><stop offset="0.153" stop-color="#48feba"/><stop offset="0.18" stop-color="#7efd81"/><stop offset="0.206" stop-color="#abfd59"/><stop offset="0.229" stop-color="#ccfd40"/><stop offset="0.252" stop-color="#e6fd36"/><stop offset="0.262" stop-color="#effc34"/><stop offset="0.283" stop-color="#fee932"/><stop offset="0.32" stop-color="#fdd22e"/><stop offset="0.364" stop-color="#fdc62c"/><stop offset="0.419" stop-color="#fdc82d"/><stop offset="0.493" stop-color="#fdda2f"/><stop offset="0.542" stop-color="#fcec32"/><stop offset="0.586" stop-color="#ecfd35"/><stop offset="0.66" stop-color="#cffd3e"/><stop offset="0.814" stop-color="#97fd6a"/><stop offset="0.912" stop-color="#7ffd80"/><stop offset="0.999" stop-color="#78fd88"/><stop offset="1" stop-color="#78fd88"/></linearGradient><linearGradient id="c24" x2="0" y2="1"><stop offset="0" stop-color="#06127e"/><stop offset="0.056" stop-color="#06127e"/><stop offset="0.077" stop-color="#0b24fb"/><stop offset="0.083" stop-color="#0b26fb"/><stop offset="0.088" stop-color="#0d35fb"/><stop offset="0.126" stop-color="#22c9fd"/><stop offset="0.131" stop-color="#25defb"/><stop offset="0.141" stop-color="#2dfee2"/><stop offset="0.156" stop-color="#46febd"/><stop offset="0.183" stop-color="#7bfd85"/><stop offset="0.209" stop-color="#a8fd5b"/><stop offset="0.234" stop-color="#cafd41"/><stop offset="0.258" stop-color="#e5fd36"/><stop offset="0.27" stop-color="#effc34"/><stop offset="0.293" stop-color="#fee932"/><stop offset="0.333" stop-color="#fdd42e"/><stop offset="0.379" stop-color="#fdca2d"/><stop offset="0.437" stop-color="#fdcf2e"/><stop offset="0.517" stop-color="#fee531"/><stop offset="0.541" stop-color="#fbee32"/><stop offset="0.584" stop-color="#ecfd35"/><stop offset="0.659" stop-color="#cffd3e"/><stop offset="0.815" stop-color="#97fd6a"/><stop offset="0.913" stop-color="#80fd80"/><stop offset="1" stop-color="#78fd87"/></linearGradient><linearGradient id="c25" x2="0" y2="1"><stop offset="0" stop-color="#06127e"/><stop offset="0.057" stop-color="#06127e"/><stop offset="0.059" stop-color="#061489"/><stop offset="0.078" stop-color="#0b24f8"/><stop offset="0.08" stop-color="#0b24fb"/><stop offset="0.085" stop-color="#0b27fb"/><stop offset="0.092" stop-color="#0d3bfb"/><stop offset="0.127" stop-color="#21c4fd"/><stop offset="0.134" stop-color="#25ddfc"/><stop offset="0.144" stop-color="#2efee1"/><stop offset="0.16" stop-color="#49feb9"/><stop offset="0.187" stop-color="#7cfd83"/><stop offset="0.214" stop-color="#a8fd5b"/><stop offset="0.24" stop-color="#cafd41"/><stop offset="0.265" stop-color="#e4fd36"/><stop offset="0.279" stop-color="#f0fb34"/><stop offset="0.303" stop-color="#fee932"/><stop offset="0.344" stop-color="#fdd62f"/><stop offset="0.393" stop-color="#fdcf2e"/><stop offset="0.456" stop-color="#fdd62f"/><stop offset="0.534" stop-color="#fced32"/><stop offset="0.58" stop-color="#ecfd35"/><stop offset="0.657" stop-color="#d0fd3e"/><stop offset="0.817" stop-color="#97fd6a"/><stop offset="0.915" stop-color="#80fd7f"/><stop offset="1" stop-color="#79fd86"/></linearGradient><linearGradient id="c26" x2="0" y2="1"><stop offset="0" stop-color="#06127e"/><stop offset="0.058" stop-color="#06127e"/><stop offset="0.06" stop-color="#061489"/><stop offset="0.079" stop-color="#0b23f6"/><stop offset="0.08" stop-color="#0b24fb"/><stop offset="0.086" stop-color="#0b26fb"/><stop offset="0.092" stop-color="#0d35fb"/><stop offset="0.13" stop-color="#21c8fd"/><stop offset="0.136" stop-color="#25dcfd"/><stop offset="0.147" stop-color="#2dfee2"/><stop offset="0.162" stop-color="#45febe"/><stop offset="0.19" stop-color="#79fd86"/><stop offset="0.217" stop-color="#a6fd5c"/><stop offset="0.244" stop-color="#c9fd42"/><stop offset="0.271" stop-color="#e3fd36"/><stop offset="0.287" stop-color="#f0fb34"/><stop offset="0.314" stop-color="#fee932"/><stop offset="0.357" stop-color="#fdd82f"/><stop offset="0.409" stop-color="#fdd32e"/><stop offset="0.477" stop-color="#fedd30"/><stop offset="0.529" stop-color="#fced32"/><stop offset="0.578" stop-color="#ecfd35"/><stop offset="0.657" stop-color="#d0fd3e"/><stop offset="0.82" stop-color="#97fd6a"/><stop offset="0.919" stop-color="#80fd7f"/><stop offset="1" stop-color="#7afd85"/></linearGradient><linearGradient id="c27" x2="0" y2="1"><stop offset="0" stop-color="#06127e"/><stop offset="0.059" stop-color="#06127e"/><stop offset="0.062" stop-color="#061488"/><stop offset="0.081" stop-color="#0b24fb"/><stop offset="0.088" stop-color="#0b27fb"/><stop offset="0.095" stop-color="#0d3bfb"/><stop offset="0.13" stop-color="#20c0fd"/><stop offset="0.138" stop-color="#25dcfd"/><stop offset="0.149" stop-color="#2dfde3"/><stop offset="0.165" stop-color="#46febd"/><stop offset="0.193" stop-color="#79fd86"/><stop offset="0.221" stop-color="#a5fd5e"/><stop offset="0.248" stop-color="#c6fd44"/><stop offset="0.276" stop-color="#e1fd37"/><stop offset="0.295" stop-color="#effb34"/><stop offset="0.326" stop-color="#fee932"/><stop offset="0.371" stop-color="#fdda2f"/><stop offset="0.426" stop-color="#fdd82f"/><stop offset="0.498" stop-color="#fee531"/><stop offset="0.526" stop-color="#fbed32"/><stop offset="0.574" stop-color="#ecfd35"/><stop offset="0.655" stop-color="#d0fd3e"/><stop offset="0.821" stop-color="#97fd6a"/><stop offset="0.92" stop-color="#81fd7f"/><stop offset="1" stop-color="#7bfd84"/></linearGradient><linearGradient id="c28" x2="0" y2="1"><stop offset="0" stop-color="#06127e"/><stop offset="0.06" stop-color="#06127e"/><stop offset="0.065" stop-color="#071697"/><stop offset="0.083" stop-color="#0b24fa"/><stop offset="0.09" stop-color="#0b27fb"/><stop offset="0.097" stop-color="#0d3afb"/><stop offset="0.133" stop-color="#20c0fd"/><stop offset="0.141" stop-color="#25dcfd"/><stop offset="0.151" stop-color="#2dfde3"/><stop offset="0.167" stop-color="#45febe"/><stop offset="0.197" stop-color="#79fd86"/><stop offset="0.226" stop-color="#a5fd5d"/><stop offset="0.253" stop-color="#c7fd43"/><stop offset="0.283" stop-color="#e1fd37"/><stop offset="0.303" stop-color="#effc34"/><stop offset="0.337" stop-color="#fee932"/><stop offset="0.385" stop-color="#fedc30"/><stop offset="0.443" stop-color="#fedd30"/><stop offset="0.516" stop-color="#fcec32"/><stop offset="0.572" stop-color="#ecfd35"/><stop offset="0.655" stop-color="#d0fd3e"/><stop offset="0.823" stop-color="#97fd6a"/><stop offset="0.922" stop-color="#81fd7e"/><stop offset="1" stop-color="#7cfd83"/></linearGradient><linearGradient id="c29" x2="0" y2="1"><stop offset="0" stop-color="#06127e"/><stop offset="0.062" stop-color="#06127e"/><stop offset="0.084" stop-color="#0b24fa"/><stop offset="0.091" stop-color="#0b27fb"/><stop offset="0.098" stop-color="#0d39fb"/><stop offset="0.135" stop-color="#20c2fd"/><stop offset="0.143" stop-color="#25ddfc"/><stop offset="0.153" stop-color="#2dfde3"/><stop offset="0.171" stop-color="#46febc"/><stop offset="0.2" stop-color="#79fd86"/><stop offset="0.229" stop-color="#a4fd5e"/><stop offset="0.258" stop-color="#c6fd44"/><stop offset="0.288" stop-color="#e0fd37"/><stop offset="0.312" stop-color="#effc34"/><stop offset="0.349" stop-color="#fee932"/><stop offset="0.399" stop-color="#fedf30"/><stop offset="0.46" stop-color="#fee231"/><stop offset="0.51" stop-color="#fced32"/><stop offset="0.569" stop-color="#ecfd35"/><stop offset="0.652" stop-color="#d0fd3e"/><stop offset="0.824" stop-color="#97fd6a"/><stop offset="0.923" stop-color="#82fd7e"/><stop offset="1" stop-color="#7dfd83"/></linearGradient><linearGradient id="c30" x2="0" y2="1"><stop offset="0" stop-color="#06127e"/><stop offset="0.063" stop-color="#06127f"/><stop offset="0.084" stop-color="#0b23f4"/><stop offset="0.085" stop-color="#0b24fa"/><stop offset="0.092" stop-color="#0b27fb"/><stop offset="0.099" stop-color="#0d39fb"/><stop offset="0.136" stop-color="#20bffd"/><stop offset="0.145" stop-color="#25defb"/><stop offset="0.156" stop-color="#2dfde3"/><stop offset="0.173" stop-color="#46febc"/><stop offset="0.202" stop-color="#78fd88"/><stop offset="0.233" stop-color="#a3fd5f"/><stop offset="0.262" stop-color="#c4fd45"/><stop offset="0.293" stop-color="#dffd37"/><stop offset="0.321" stop-color="#f0fb34"/><stop offset="0.363" stop-color="#fee932"/><stop offset="0.415" stop-color="#fee231"/><stop offset="0.481" stop-color="#fee832"/><stop offset="0.524" stop-color="#f7f233"/><stop offset="0.565" stop-color="#ecfd35"/><stop offset="0.651" stop-color="#d0fd3e"/><stop offset="0.827" stop-color="#97fd6a"/><stop offset="0.927" stop-color="#82fd7d"/><stop offset="1" stop-color="#7dfd82"/></linearGradient><linearGradient id="c31" x2="0" y2="1"><stop offset="0" stop-color="#06127e"/><stop offset="0.063" stop-color="#06127e"/><stop offset="0.067" stop-color="#071696"/><stop offset="0.086" stop-color="#0b24fb"/><stop offset="0.093" stop-color="#0b27fb"/><stop offset="0.1" stop-color="#0d39fb"/><stop offset="0.138" stop-color="#20c1fd"/><stop offset="0.147" stop-color="#24dbfd"/><stop offset="0.158" stop-color="#2dfee2"/><stop offset="0.176" stop-color="#46febd"/><stop offset="0.206" stop-color="#78fd87"/><stop offset="0.236" stop-color="#a3fd5f"/><stop offset="0.266" stop-color="#c4fd45"/><stop offset="0.299" stop-color="#defd38"/><stop offset="0.329" stop-color="#effc34"/><stop offset="0.376" stop-color="#feea32"/><stop offset="0.431" stop-color="#fee531"/><stop offset="0.494" stop-color="#fced32"/><stop offset="0.562" stop-color="#ecfd35"/><stop offset="0.65" stop-color="#d0fd3e"/><stop offset="0.829" stop-color="#96fd6a"/><stop offset="0.929" stop-color="#82fd7d"/><stop offset="1" stop-color="#7efd81"/></linearGradient><linearGradient id="c32" x2="0" y2="1"><stop offset="0" stop-color="#06127e"/><stop offset="0.064" stop-color="#06127f"/><stop offset="0.085" stop-color="#0b23f1"/><stop offset="0.087" stop-color="#0b24fb"/><stop offset="0.094" stop-color="#0b27fb"/><stop offset="0.102" stop-color="#0d3dfb"/><stop offset="0.138" stop-color="#20bcfc"/><stop offset="0.149" stop-color="#25ddfc"/><stop offset="0.16" stop-color="#2efee1"/><stop offset="0.179" stop-color="#48feba"/><stop offset="0.209" stop-color="#79fd86"/><stop offset="0.241" stop-color="#a4fd5e"/><stop offset="0.272" stop-color="#c5fd45"/><stop offset="0.306" stop-color="#dffd37"/><stop offset="0.338" stop-color="#f0fb34"/><stop offset="0.386" stop-color="#fdec32"/><stop offset="0.444" stop-color="#fee832"/><stop offset="0.495" stop-color="#faef32"/><stop offset="0.558" stop-color="#ecfd35"/><stop offset="0.648" stop-color="#d1fd3d"/><stop offset="0.831" stop-color="#96fd6a"/><stop offset="0.931" stop-color="#83fd7d"/><stop offset="1" stop-color="#7ffd81"/></linearGradient><linearGradient id="c33" x2="0" y2="1"><stop offset="0" stop-color="#06127e"/><stop offset="0.064" stop-color="#06127e"/><stop offset="0.087" stop-color="#0b24f9"/><stop offset="0.094" stop-color="#0b26fb"/><stop offset="0.101" stop-color="#0d37fb"/><stop offset="0.141" stop-color="#20bffd"/><stop offset="0.15" stop-color="#24dcfd"/><stop offset="0.162" stop-color="#2dfde3"/><stop offset="0.18" stop-color="#46febc"/><stop offset="0.21" stop-color="#77fd89"/><stop offset="0.242" stop-color="#a1fd61"/><stop offset="0.273" stop-color="#c2fd47"/><stop offset="0.308" stop-color="#dcfd38"/><stop offset="0.348" stop-color="#f0fb34"/><stop offset="0.398" stop-color="#fbed32"/><stop offset="0.458" stop-color="#fcec32"/><stop offset="0.536" stop-color="#f0fb34"/><stop offset="0.567" stop-color="#e8fd35"/><stop offset="0.659" stop-color="#ccfd40"/><stop offset="0.835" stop-color="#96fd6b"/><stop offset="0.935" stop-color="#83fd7c"/><stop offset="1" stop-color="#7ffd80"/></linearGradient><linearGradient id="c34" x2="0" y2="1"><stop offset="0" stop-color="#06127e"/><stop offset="0.064" stop-color="#06127e"/><stop offset="0.066" stop-color="#061388"/><stop offset="0.087" stop-color="#0b23f6"/><stop offset="0.088" stop-color="#0b24fb"/><stop offset="0.095" stop-color="#0b27fb"/><stop offset="0.102" stop-color="#0d38fb"/><stop offset="0.142" stop-color="#20befd"/><stop offset="0.151" stop-color="#24dbfd"/><stop offset="0.164" stop-color="#2efee1"/><stop offset="0.184" stop-color="#49feb9"/><stop offset="0.215" stop-color="#7afd86"/><stop offset="0.248" stop-color="#a4fd5e"/><stop offset="0.28" stop-color="#c4fd45"/><stop offset="0.316" stop-color="#ddfd38"/><stop offset="0.357" stop-color="#f0fb34"/><stop offset="0.408" stop-color="#faef32"/><stop offset="0.471" stop-color="#f9f032"/><stop offset="0.551" stop-color="#ebfd35"/><stop offset="0.645" stop-color="#d1fd3e"/><stop offset="0.836" stop-color="#96fd6b"/><stop offset="0.936" stop-color="#84fd7c"/><stop offset="1" stop-color="#80fd7f"/></linearGradient><linearGradient id="c35" x2="0" y2="1"><stop offset="0" stop-color="#06127e"/><stop offset="0.064" stop-color="#06127e"/><stop offset="0.065" stop-color="#061280"/><stop offset="0.087" stop-color="#0b23f4"/><stop offset="0.088" stop-color="#0b24fa"/><stop offset="0.095" stop-color="#0b26fb"/><stop offset="0.102" stop-color="#0d36fb"/><stop offset="0.143" stop-color="#20befd"/><stop offset="0.153" stop-color="#25defb"/><stop offset="0.165" stop-color="#2dfee2"/><stop offset="0.184" stop-color="#46febd"/><stop offset="0.215" stop-color="#76fd89"/><stop offset="0.248" stop-color="#a0fd62"/><stop offset="0.281" stop-color="#c1fd47"/><stop offset="0.319" stop-color="#dbfd39"/><stop offset="0.366" stop-color="#effb34"/><stop offset="0.42" stop-color="#f8f133"/><stop offset="0.486" stop-color="#f6f433"/><stop offset="0.545" stop-color="#ecfd35"/><stop offset="0.642" stop-color="#d1fd3d"/><stop offset="0.793" stop-color="#a2fd60"/><stop offset="0.903" stop-color="#89fd77"/><stop offset="0.995" stop-color="#81fd7f"/><stop offset="1" stop-color="#81fd7f"/></linearGradient><linearGradient id="c36" x2="0" y2="1"><stop offset="0" stop-color="#06127e"/><stop offset="0.064" stop-color="#06127e"/><stop offset="0.065" stop-color="#061280"/><stop offset="0.087" stop-color="#0b23f3"/><stop offset="0.09" stop-color="#0b24fb"/><stop offset="0.097" stop-color="#0b27fb"/><stop offset="0.105" stop-color="#0d3bfb"/><stop offset="0.143" stop-color="#1fbbfc"/><stop offset="0.155" stop-color="#25ddfc"/><stop offset="0.166" stop-color="#2dfde3"/><stop offset="0.186" stop-color="#47febc"/><stop offset="0.217" stop-color="#76fd89"/><stop offset="0.25" stop-color="#9ffd62"/><stop offset="0.284" stop-color="#c0fd48"/><stop offset="0.322" stop-color="#dafd39"/><stop offset="0.372" stop-color="#eefd34"/><stop offset="0.427" stop-color="#f6f333"/><stop offset="0.494" stop-color="#f3f733"/><stop offset="0.541" stop-color="#ebfd35"/><stop offset="0.64" stop-color="#d1fd3d"/><stop offset="0.785" stop-color="#a4fd5e"/><stop offset="0.899" stop-color="#8afd76"/><stop offset="0.992" stop-color="#81fd7e"/><stop offset="1" stop-color="#81fd7e"/></linearGradient><linearGradient id="c37" x2="0" y2="1"><stop offset="0" stop-color="#06127e"/><stop offset="0.064" stop-color="#06127e"/><stop offset="0.066" stop-color="#061387"/><stop offset="0.088" stop-color="#0b23f7"/><stop offset="0.09" stop-color="#0b24fb"/><stop offset="0.097" stop-color="#0b26fb"/><stop offset="0.105" stop-color="#0d3afb"/><stop offset="0.144" stop-color="#1fbbfc"/><stop offset="0.156" stop-color="#25defb"/><stop offset="0.169" stop-color="#2efee1"/><stop offset="0.19" stop-color="#49feb8"/><stop offset="0.222" stop-color="#79fd86"/><stop offset="0.256" stop-color="#a2fd60"/><stop offset="0.291" stop-color="#c2fd46"/><stop offset="0.33" stop-color="#dbfd39"/><stop offset="0.381" stop-color="#eefd35"/><stop offset="0.438" stop-color="#f5f533"/><stop offset="0.509" stop-color="#f0fb34"/><stop offset="0.573" stop-color="#e3fd36"/><stop offset="0.673" stop-color="#c7fd43"/><stop offset="0.847" stop-color="#95fd6c"/><stop offset="0.947" stop-color="#84fd7b"/><stop offset="1" stop-color="#82fd7e"/></linearGradient><linearGradient id="c38" x2="0" y2="1"><stop offset="0" stop-color="#06127e"/><stop offset="0.064" stop-color="#06127e"/><stop offset="0.088" stop-color="#0b23f7"/><stop offset="0.09" stop-color="#0b24fb"/><stop offset="0.097" stop-color="#0b26fb"/><stop offset="0.105" stop-color="#0d39fb"/><stop offset="0.145" stop-color="#20bdfc"/><stop offset="0.156" stop-color="#24dbfd"/><stop offset="0.17" stop-color="#2efee1"/><stop offset="0.192" stop-color="#4bfeb7"/><stop offset="0.224" stop-color="#7afd86"/><stop offset="0.258" stop-color="#a2fd60"/><stop offset="0.294" stop-color="#c2fd47"/><stop offset="0.335" stop-color="#dbfd39"/><stop offset="0.387" stop-color="#edfd35"/><stop offset="0.451" stop-color="#f3f733"/><stop offset="0.533" stop-color="#ebfd35"/><stop offset="0.637" stop-color="#d1fd3d"/><stop offset="0.783" stop-color="#a6fd5d"/><stop offset="0.899" stop-color="#8bfd75"/><stop offset="0.993" stop-color="#82fd7d"/><stop offset="1" stop-color="#82fd7d"/></linearGradient><linearGradient id="c39" x2="0" y2="1"><stop offset="0" stop-color="#06127e"/><stop offset="0.064" stop-color="#06127e"/><stop offset="0.087" stop-color="#0b23f2"/><stop offset="0.09" stop-color="#0b24fb"/><stop offset="0.097" stop-color="#0b26fb"/><stop offset="0.105" stop-color="#0d39fb"/><stop offset="0.145" stop-color="#1fbbfc"/><stop offset="0.157" stop-color="#24dcfd"/><stop offset="0.17" stop-color="#2dfde3"/><stop offset="0.191" stop-color="#47febb"/><stop offset="0.223" stop-color="#75fd8a"/><stop offset="0.258" stop-color="#9ffd63"/><stop offset="0.294" stop-color="#bffd49"/><stop offset="0.336" stop-color="#d9fd3a"/><stop offset="0.39" stop-color="#ebfd35"/><stop offset="0.453" stop-color="#f1f934"/><stop offset="0.535" stop-color="#e9fd35"/><stop offset="0.641" stop-color="#d0fd3e"/><stop offset="0.805" stop-color="#a0fd62"/><stop offset="0.915" stop-color="#89fd77"/><stop offset="1" stop-color="#83fd7d"/></linearGradient><linearGradient id="c40" x2="0" y2="1"><stop offset="0" stop-color="#06127e"/><stop offset="0.063" stop-color="#06127e"/><stop offset="0.065" stop-color="#061386"/><stop offset="0.088" stop-color="#0b24f8"/><stop offset="0.091" stop-color="#0b24fb"/><stop offset="0.098" stop-color="#0b28fb"/><stop offset="0.107" stop-color="#0e40fb"/><stop offset="0.145" stop-color="#1fb9fc"/><stop offset="0.158" stop-color="#25ddfc"/><stop offset="0.171" stop-color="#2dfee2"/><stop offset="0.192" stop-color="#47febb"/><stop offset="0.226" stop-color="#76fd89"/><stop offset="0.26" stop-color="#9ffd63"/><stop offset="0.298" stop-color="#bffd49"/><stop offset="0.341" stop-color="#d8fd3a"/><stop offset="0.394" stop-color="#eafd35"/><stop offset="0.459" stop-color="#effb34"/><stop offset="0.543" stop-color="#e6fd35"/><stop offset="0.649" stop-color="#cdfd40"/><stop offset="0.849" stop-color="#95fd6b"/><stop offset="0.95" stop-color="#85fd7a"/><stop offset="1" stop-color="#83fd7c"/></linearGradient><linearGradient id="c41" x2="0" y2="1"><stop offset="0" stop-color="#06127e"/><stop offset="0.063" stop-color="#06127e"/><stop offset="0.087" stop-color="#0b23f4"/><stop offset="0.088" stop-color="#0b24fa"/><stop offset="0.097" stop-color="#0b27fb"/><stop offset="0.105" stop-color="#0d39fb"/><stop offset="0.147" stop-color="#1fbbfc"/><stop offset="0.158" stop-color="#24dcfd"/><stop offset="0.172" stop-color="#2efee1"/><stop offset="0.194" stop-color="#49feb9"/><stop offset="0.228" stop-color="#77fd88"/><stop offset="0.264" stop-color="#a0fd62"/><stop offset="0.301" stop-color="#bffd49"/><stop offset="0.345" stop-color="#d8fd3a"/><stop offset="0.4" stop-color="#e9fd35"/><stop offset="0.466" stop-color="#eefd35"/><stop offset="0.552" stop-color="#e4fd36"/><stop offset="0.658" stop-color="#cafd41"/><stop offset="0.851" stop-color="#95fd6b"/><stop offset="0.952" stop-color="#86fd7a"/><stop offset="1" stop-color="#84fd7c"/></linearGradient><linearGradient id="c42" x2="0" y2="1"><stop offset="0" stop-color="#06127e"/><stop offset="0.062" stop-color="#06127e"/><stop offset="0.07" stop-color="#0718a4"/><stop offset="0.088" stop-color="#0b24fb"/><stop offset="0.097" stop-color="#0b27fb"/><stop offset="0.106" stop-color="#0d3dfb"/><stop offset="0.145" stop-color="#1fb7fc"/><stop offset="0.159" stop-color="#25ddfc"/><stop offset="0.172" stop-color="#2dfee2"/><stop offset="0.194" stop-color="#47febb"/><stop offset="0.229" stop-color="#77fd89"/><stop offset="0.265" stop-color="#9ffd63"/><stop offset="0.303" stop-color="#befd49"/><stop offset="0.349" stop-color="#d7fd3a"/><stop offset="0.405" stop-color="#e8fd35"/><stop offset="0.472" stop-color="#ecfd35"/><stop offset="0.56" stop-color="#e1fd37"/><stop offset="0.669" stop-color="#c7fd43"/><stop offset="0.853" stop-color="#95fd6c"/><stop offset="0.955" stop-color="#86fd7a"/><stop offset="1" stop-color="#84fd7b"/></linearGradient><linearGradient id="c43" x2="0" y2="1"><stop offset="0" stop-color="#06127e"/><stop offset="0.06" stop-color="#06127e"/><stop offset="0.063" stop-color="#061386"/><stop offset="0.087" stop-color="#0b24f9"/><stop offset="0.095" stop-color="#0b26fb"/><stop offset="0.103" stop-color="#0d38fb"/><stop offset="0.147" stop-color="#1fbafc"/><stop offset="0.159" stop-color="#25ddfc"/><stop offset="0.173" stop-color="#2efee1"/><stop offset="0.197" stop-color="#49feb9"/><stop offset="0.231" stop-color="#78fd88"/><stop offset="0.269" stop-color="#a0fd62"/><stop offset="0.308" stop-color="#bffd48"/><stop offset="0.355" stop-color="#d8fd3a"/><stop offset="0.412" stop-color="#e7fd35"/><stop offset="0.481" stop-color="#eafd35"/><stop offset="0.573" stop-color="#defd38"/><stop offset="0.684" stop-color="#c2fd46"/><stop offset="0.858" stop-color="#94fd6c"/><stop offset="0.959" stop-color="#86fd79"/><stop offset="1" stop-color="#85fd7b"/></linearGradient><linearGradient id="c44" x2="0" y2="1"><stop offset="0" stop-color="#06127e"/><stop offset="0.059" stop-color="#06127e"/><stop offset="0.06" stop-color="#06127f"/><stop offset="0.085" stop-color="#0b23f2"/><stop offset="0.087" stop-color="#0b24fb"/><stop offset="0.095" stop-color="#0b27fb"/><stop offset="0.105" stop-color="#0d3dfb"/><stop offset="0.145" stop-color="#1fb7fc"/><stop offset="0.159" stop-color="#25dcfc"/><stop offset="0.173" stop-color="#2dfee2"/><stop offset="0.195" stop-color="#47febb"/><stop offset="0.23" stop-color="#75fd8a"/><stop offset="0.267" stop-color="#9dfd64"/><stop offset="0.307" stop-color="#bdfd4a"/><stop offset="0.353" stop-color="#d5fd3b"/><stop offset="0.41" stop-color="#e5fd36"/><stop offset="0.48" stop-color="#e9fd35"/><stop offset="0.571" stop-color="#ddfd38"/><stop offset="0.683" stop-color="#c2fd46"/><stop offset="0.859" stop-color="#94fd6c"/><stop offset="0.96" stop-color="#87fd79"/><stop offset="1" stop-color="#85fd7a"/></linearGradient><linearGradient id="c45" x2="0" y2="1"><stop offset="0" stop-color="#06127e"/><stop offset="0.058" stop-color="#06127e"/><stop offset="0.06" stop-color="#061385"/><stop offset="0.085" stop-color="#0b23f6"/><stop offset="0.086" stop-color="#0b24fb"/><stop offset="0.094" stop-color="#0b27fb"/><stop offset="0.103" stop-color="#0d3bfb"/><stop offset="0.145" stop-color="#1fb7fc"/><stop offset="0.159" stop-color="#25dcfc"/><stop offset="0.173" stop-color="#2dfee2"/><stop offset="0.197" stop-color="#48feba"/><stop offset="0.233" stop-color="#76fd89"/><stop offset="0.27" stop-color="#9dfd64"/><stop offset="0.31" stop-color="#bdfd4a"/><stop offset="0.358" stop-color="#d5fd3b"/><stop offset="0.416" stop-color="#e4fd36"/><stop offset="0.487" stop-color="#e7fd35"/><stop offset="0.581" stop-color="#dafd39"/><stop offset="0.697" stop-color="#befd49"/><stop offset="0.864" stop-color="#94fd6d"/><stop offset="0.965" stop-color="#87fd79"/><stop offset="1" stop-color="#86fd7a"/></linearGradient><linearGradient id="c46" x2="0" y2="1"><stop offset="0" stop-color="#06127e"/><stop offset="0.057" stop-color="#06127e"/><stop offset="0.06" stop-color="#06148c"/><stop offset="0.085" stop-color="#0b24fb"/><stop offset="0.093" stop-color="#0b26fb"/><stop offset="0.102" stop-color="#0d3bfb"/><stop offset="0.145" stop-color="#1fb8fc"/><stop offset="0.159" stop-color="#25ddfc"/><stop offset="0.173" stop-color="#2dfee2"/><stop offset="0.197" stop-color="#47febb"/><stop offset="0.233" stop-color="#75fd8a"/><stop offset="0.271" stop-color="#9dfd64"/><stop offset="0.312" stop-color="#bcfd4b"/><stop offset="0.36" stop-color="#d4fd3c"/><stop offset="0.42" stop-color="#e3fd36"/><stop offset="0.492" stop-color="#e6fd36"/><stop offset="0.587" stop-color="#d9fd3a"/><stop offset="0.705" stop-color="#bcfd4b"/><stop offset="0.867" stop-color="#93fd6d"/><stop offset="0.969" stop-color="#87fd79"/><stop offset="1" stop-color="#86fd7a"/></linearGradient><linearGradient id="c47" x2="0" y2="1"><stop offset="0" stop-color="#06127e"/><stop offset="0.056" stop-color="#06127e"/><stop offset="0.083" stop-color="#0b23f6"/><stop offset="0.084" stop-color="#0b24fb"/><stop offset="0.092" stop-color="#0b26fb"/><stop offset="0.101" stop-color="#0d3afb"/><stop offset="0.145" stop-color="#1fb9fc"/><stop offset="0.159" stop-color="#25ddfc"/><stop offset="0.173" stop-color="#2dfee2"/><stop offset="0.197" stop-color="#47febb"/><stop offset="0.233" stop-color="#74fd8b"/><stop offset="0.271" stop-color="#9cfd66"/><stop offset="0.313" stop-color="#bbfd4b"/><stop offset="0.362" stop-color="#d3fd3c"/><stop offset="0.422" stop-color="#e2fd36"/><stop offset="0.495" stop-color="#e4fd36"/><stop offset="0.592" stop-color="#d7fd3a"/><stop offset="0.713" stop-color="#b9fd4d"/><stop offset="0.871" stop-color="#93fd6d"/><stop offset="0.972" stop-color="#87fd79"/><stop offset="1" stop-color="#86fd79"/></linearGradient><linearGradient id="c48" x2="0" y2="1"><stop offset="0" stop-color="#06127e"/><stop offset="0.053" stop-color="#06127e"/><stop offset="0.055" stop-color="#06127f"/><stop offset="0.08" stop-color="#0b23f2"/><stop offset="0.083" stop-color="#0b24fb"/><stop offset="0.091" stop-color="#0b26fb"/><stop offset="0.1" stop-color="#0d3afb"/><stop offset="0.144" stop-color="#1fb8fc"/><stop offset="0.158" stop-color="#24dbfd"/><stop offset="0.173" stop-color="#2efee2"/><stop offset="0.198" stop-color="#48feba"/><stop offset="0.235" stop-color="#76fd89"/><stop offset="0.274" stop-color="#9dfd64"/><stop offset="0.316" stop-color="#bcfd4b"/><stop offset="0.367" stop-color="#d4fd3c"/><stop offset="0.429" stop-color="#e1fd37"/><stop offset="0.505" stop-color="#e3fd36"/><stop offset="0.606" stop-color="#d3fd3c"/><stop offset="0.735" stop-color="#b3fd52"/><stop offset="0.88" stop-color="#92fd6f"/><stop offset="0.98" stop-color="#87fd79"/><stop offset="1" stop-color="#87fd79"/></linearGradient><linearGradient id="c49" x2="0" y2="1"><stop offset="0" stop-color="#06127e"/><stop offset="0.052" stop-color="#06127e"/><stop offset="0.079" stop-color="#0b23f4"/><stop offset="0.081" stop-color="#0b24fb"/><stop offset="0.09" stop-color="#0b27fb"/><stop offset="0.099" stop-color="#0d3afb"/><stop offset="0.143" stop-color="#1fb7fc"/><stop offset="0.158" stop-color="#25ddfc"/><stop offset="0.173" stop-color="#2efee1"/><stop offset="0.199" stop-color="#4afeb8"/><stop offset="0.236" stop-color="#77fd89"/><stop offset="0.276" stop-color="#9dfd64"/><stop offset="0.319" stop-color="#bcfd4b"/><stop offset="0.371" stop-color="#d3fd3c"/><stop offset="0.434" stop-color="#e1fd37"/><stop offset="0.51" stop-color="#e1fd37"/><stop offset="0.614" stop-color="#d1fd3d"/><stop offset="0.75" stop-color="#affd55"/><stop offset="0.888" stop-color="#90fd70"/><stop offset="0.987" stop-color="#87fd78"/><stop offset="1" stop-color="#87fd78"/></linearGradient><linearGradient id="c50" x2="0" y2="1"><stop offset="0" stop-color="#06127e"/><stop offset="0.05" stop-color="#06127e"/><stop offset="0.079" stop-color="#0b24fb"/><stop offset="0.088" stop-color="#0b27fb"/><stop offset="0.099" stop-color="#0e3efb"/><stop offset="0.142" stop-color="#1fb6fc"/><stop offset="0.157" stop-color="#24dcfd"/><stop offset="0.172" stop-color="#2dfee2"/><stop offset="0.197" stop-color="#47febb"/><stop offset="0.235" stop-color="#75fd8a"/><stop offset="0.276" stop-color="#9cfd65"/><stop offset="0.32" stop-color="#bbfd4b"/><stop offset="0.373" stop-color="#d3fd3c"/><stop offset="0.437" stop-color="#e0fd37"/><stop offset="0.515" stop-color="#e0fd37"/><stop offset="0.621" stop-color="#cffd3e"/><stop offset="0.766" stop-color="#abfd58"/><stop offset="0.898" stop-color="#8ffd71"/><stop offset="0.997" stop-color="#88fd78"/><stop offset="1" stop-color="#88fd78"/></linearGradient><linearGradient id="c51" x2="0" y2="1"><stop offset="0" stop-color="#06127e"/><stop offset="0.048" stop-color="#06127e"/><stop offset="0.077" stop-color="#0b24f9"/><stop offset="0.086" stop-color="#0b27fb"/><stop offset="0.095" stop-color="#0d39fb"/><stop offset="0.142" stop-color="#1fb9fc"/><stop offset="0.157" stop-color="#25defb"/><stop offset="0.172" stop-color="#2efee1"/><stop offset="0.199" stop-color="#4afeb7"/><stop offset="0.237" stop-color="#77fd88"/><stop offset="0.278" stop-color="#9dfd64"/><stop offset="0.322" stop-color="#bbfd4b"/><stop offset="0.377" stop-color="#d3fd3c"/><stop offset="0.442" stop-color="#dffd37"/><stop offset="0.522" stop-color="#defd38"/><stop offset="0.631" stop-color="#ccfd40"/><stop offset="0.8" stop-color="#a3fd5f"/><stop offset="0.919" stop-color="#8dfd73"/><stop offset="1" stop-color="#88fd78"/></linearGradient><linearGradient id="c52" x2="0" y2="1"><stop offset="0" stop-color="#06127e"/><stop offset="0.045" stop-color="#06127e"/><stop offset="0.074" stop-color="#0b24f8"/><stop offset="0.077" stop-color="#0b24fb"/><stop offset="0.085" stop-color="#0b28fb"/><stop offset="0.095" stop-color="#0e3efb"/><stop offset="0.14" stop-color="#1fb6fc"/><stop offset="0.156" stop-color="#25ddfb"/><stop offset="0.171" stop-color="#2efee2"/><stop offset="0.197" stop-color="#48feba"/><stop offset="0.235" stop-color="#75fd8b"/><stop offset="0.276" stop-color="#9bfd66"/><stop offset="0.321" stop-color="#bafd4c"/><stop offset="0.376" stop-color="#d1fd3d"/><stop offset="0.441" stop-color="#defd38"/><stop offset="0.521" stop-color="#ddfd38"/><stop offset="0.63" stop-color="#ccfd40"/><stop offset="0.798" stop-color="#a3fd5f"/><stop offset="0.919" stop-color="#8dfd73"/><stop offset="1" stop-color="#88fd78"/></linearGradient><linearGradient id="c53" x2="0" y2="1"><stop offset="0" stop-color="#06127e"/><stop offset="0.043" stop-color="#06127e"/><stop offset="0.071" stop-color="#0b23f3"/><stop offset="0.073" stop-color="#0b24fb"/><stop offset="0.083" stop-color="#0b27fb"/><stop offset="0.093" stop-color="#0d3dfb"/><stop offset="0.138" stop-color="#1fb7fc"/><stop offset="0.155" stop-color="#25defb"/><stop offset="0.17" stop-color="#2dfee2"/><stop offset="0.195" stop-color="#47febb"/><stop offset="0.235" stop-color="#75fd8a"/><stop offset="0.277" stop-color="#9bfd66"/><stop offset="0.322" stop-color="#bafd4d"/><stop offset="0.378" stop-color="#d1fd3d"/><stop offset="0.444" stop-color="#ddfd38"/><stop offset="0.526" stop-color="#dcfd38"/><stop offset="0.637" stop-color="#cafd41"/><stop offset="0.872" stop-color="#94fd6c"/><stop offset="0.976" stop-color="#89fd77"/><stop offset="1" stop-color="#88fd77"/></linearGradient><linearGradient id="c54" x2="0" y2="1"><stop offset="0" stop-color="#06127e"/><stop offset="0.04" stop-color="#06127e"/><stop offset="0.042" stop-color="#061385"/><stop offset="0.07" stop-color="#0b24f8"/><stop offset="0.073" stop-color="#0b24fb"/><stop offset="0.08" stop-color="#0b27fb"/><stop offset="0.091" stop-color="#0d3dfb"/><stop offset="0.137" stop-color="#1fb8fc"/><stop offset="0.152" stop-color="#24dbfd"/><stop offset="0.169" stop-color="#2dfee2"/><stop offset="0.195" stop-color="#48feba"/><stop offset="0.235" stop-color="#75fd8a"/><stop offset="0.277" stop-color="#9bfd66"/><stop offset="0.323" stop-color="#b9fd4d"/><stop offset="0.38" stop-color="#d0fd3e"/><stop offset="0.448" stop-color="#dcfd38"/><stop offset="0.53" stop-color="#dbfd39"/><stop offset="0.644" stop-color="#c8fd42"/><stop offset="0.872" stop-color="#94fd6c"/><stop offset="0.976" stop-color="#89fd77"/><stop offset="1" stop-color="#89fd77"/></linearGradient><linearGradient id="c55" x2="0" y2="1"><stop offset="0" stop-color="#06127e"/><stop offset="0.037" stop-color="#06127e"/><stop offset="0.065" stop-color="#0b23f1"/><stop offset="0.067" stop-color="#0b24fa"/><stop offset="0.077" stop-color="#0b26fb"/><stop offset="0.086" stop-color="#0d37fb"/><stop offset="0.136" stop-color="#1fb9fc"/><stop offset="0.151" stop-color="#25dcfc"/><stop offset="0.167" stop-color="#2efee2"/><stop offset="0.195" stop-color="#49feb8"/><stop offset="0.236" stop-color="#77fd89"/><stop offset="0.279" stop-color="#9dfd65"/><stop offset="0.327" stop-color="#bafd4c"/><stop offset="0.385" stop-color="#d1fd3d"/><stop offset="0.453" stop-color="#dcfd39"/><stop offset="0.538" stop-color="#d9fd39"/><stop offset="0.657" stop-color="#c5fd45"/><stop offset="0.873" stop-color="#94fd6c"/><stop offset="0.977" stop-color="#89fd76"/><stop offset="1" stop-color="#89fd77"/></linearGradient><linearGradient id="c56" x2="0" y2="1"><stop offset="0" stop-color="#06127e"/><stop offset="0.034" stop-color="#06127e"/><stop offset="0.064" stop-color="#0b24f7"/><stop offset="0.065" stop-color="#0b24fb"/><stop offset="0.074" stop-color="#0b27fb"/><stop offset="0.085" stop-color="#0d3bfb"/><stop offset="0.134" stop-color="#1fb9fc"/><stop offset="0.15" stop-color="#25defb"/><stop offset="0.166" stop-color="#2efee1"/><stop offset="0.195" stop-color="#4bfeb7"/><stop offset="0.236" stop-color="#77fd88"/><stop offset="0.28" stop-color="#9dfd64"/><stop offset="0.328" stop-color="#bafd4c"/><stop offset="0.387" stop-color="#d0fd3e"/><stop offset="0.457" stop-color="#dbfd39"/><stop offset="0.544" stop-color="#d8fd3a"/><stop offset="0.666" stop-color="#c2fd46"/><stop offset="0.874" stop-color="#94fd6c"/><stop offset="0.978" stop-color="#8afd76"/><stop offset="1" stop-color="#89fd77"/></linearGradient><linearGradient id="c57" x2="0" y2="1"><stop offset="0" stop-color="#06127e"/><stop offset="0.03" stop-color="#06127e"/><stop offset="0.059" stop-color="#0b23f2"/><stop offset="0.062" stop-color="#0b24fa"/><stop offset="0.071" stop-color="#0b26fb"/><stop offset="0.08" stop-color="#0d37fb"/><stop offset="0.133" stop-color="#1fbbfc"/><stop offset="0.148" stop-color="#25ddfc"/><stop offset="0.164" stop-color="#2dfee2"/><stop offset="0.192" stop-color="#48feba"/><stop offset="0.233" stop-color="#74fd8b"/><stop offset="0.277" stop-color="#9bfd66"/><stop offset="0.326" stop-color="#b9fd4d"/><stop offset="0.385" stop-color="#cffd3e"/><stop offset="0.455" stop-color="#dafd39"/><stop offset="0.542" stop-color="#d7fd3a"/><stop offset="0.663" stop-color="#c3fd46"/><stop offset="0.876" stop-color="#94fd6c"/><stop offset="0.98" stop-color="#8afd76"/><stop offset="1" stop-color="#89fd76"/></linearGradient><linearGradient id="c58" x2="0" y2="1"><stop offset="0" stop-color="#06127e"/><stop offset="0.027" stop-color="#06127f"/><stop offset="0.057" stop-color="#0b23f6"/><stop offset="0.059" stop-color="#0b24fb"/><stop offset="0.069" stop-color="#0b27fb"/><stop offset="0.079" stop-color="#0d3bfb"/><stop offset="0.129" stop-color="#1fb8fc"/><stop offset="0.145" stop-color="#25ddfc"/><stop offset="0.163" stop-color="#2efee1"/><stop offset="0.193" stop-color="#4bfeb6"/><stop offset="0.235" stop-color="#77fd88"/><stop offset="0.28" stop-color="#9dfd64"/><stop offset="0.33" stop-color="#bbfd4c"/><stop offset="0.391" stop-color="#d0fd3e"/><stop offset="0.463" stop-color="#d9fd39"/><stop offset="0.552" stop-color="#d6fd3b"/><stop offset="0.68" stop-color="#bffd49"/><stop offset="0.877" stop-color="#94fd6c"/><stop offset="0.981" stop-color="#8afd76"/><stop offset="1" stop-color="#8afd76"/></linearGradient><linearGradient id="c59" x2="0" y2="1"><stop offset="0" stop-color="#06127e"/><stop offset="0.022" stop-color="#06127e"/><stop offset="0.055" stop-color="#0b24fa"/><stop offset="0.065" stop-color="#0b27fb"/><stop offset="0.077" stop-color="#0d3efb"/><stop offset="0.126" stop-color="#1fb6fc"/><stop offset="0.143" stop-color="#25ddfc"/><stop offset="0.16" stop-color="#2efee1"/><stop offset="0.191" stop-color="#4bfeb7"/><stop offset="0.234" stop-color="#77fd88"/><stop offset="0.279" stop-color="#9dfd65"/><stop offset="0.329" stop-color="#bafd4c"/><stop offset="0.391" stop-color="#cffd3e"/><stop offset="0.463" stop-color="#d9fd3a"/><stop offset="0.553" stop-color="#d5fd3b"/><stop offset="0.683" stop-color="#befd49"/><stop offset="0.879" stop-color="#94fd6d"/><stop offset="0.984" stop-color="#8afd76"/><stop offset="1" stop-color="#8afd76"/></linearGradient><linearGradient id="c60" x2="0" y2="1"><stop offset="0" stop-color="#06127e"/><stop offset="0.017" stop-color="#06127e"/><stop offset="0.05" stop-color="#0b24f8"/><stop offset="0.052" stop-color="#0b24fb"/><stop offset="0.062" stop-color="#0b27fb"/><stop offset="0.073" stop-color="#0d3efb"/><stop offset="0.123" stop-color="#1fb7fc"/><stop offset="0.141" stop-color="#25ddfc"/><stop offset="0.158" stop-color="#2efee1"/><stop offset="0.188" stop-color="#4afeb7"/><stop offset="0.231" stop-color="#76fd89"/><stop offset="0.278" stop-color="#9cfd65"/><stop offset="0.329" stop-color="#b9fd4d"/><stop offset="0.391" stop-color="#cefd3f"/><stop offset="0.464" stop-color="#d8fd3a"/><stop offset="0.556" stop-color="#d4fd3c"/><stop offset="0.686" stop-color="#bdfd4a"/><stop offset="0.88" stop-color="#94fd6d"/><stop offset="0.985" stop-color="#8afd76"/><stop offset="1" stop-color="#8afd76"/></linearGradient><linearGradient id="c61" x2="0" y2="1"><stop offset="0" stop-color="#06127e"/><stop offset="0.013" stop-color="#06127e"/><stop offset="0.047" stop-color="#0b24fa"/><stop offset="0.057" stop-color="#0b27fb"/><stop offset="0.069" stop-color="#0d3cfb"/><stop offset="0.121" stop-color="#1fb9fc"/><stop offset="0.137" stop-color="#25dcfd"/><stop offset="0.156" stop-color="#2efee1"/><stop offset="0.187" stop-color="#4bfeb6"/><stop offset="0.231" stop-color="#78fd87"/><stop offset="0.278" stop-color="#9dfd65"/><stop offset="0.33" stop-color="#bafd4c"/><stop offset="0.393" stop-color="#cefd3f"/><stop offset="0.467" stop-color="#d7fd3a"/><stop offset="0.56" stop-color="#d3fd3c"/><stop offset="0.692" stop-color="#bbfd4b"/><stop offset="0.881" stop-color="#94fd6d"/><stop offset="0.986" stop-color="#8afd75"/><stop offset="1" stop-color="#8afd76"/></linearGradient><linearGradient id="c62" x2="0" y2="1"><stop offset="0" stop-color="#06127e"/><stop offset="0.008" stop-color="#06127e"/><stop offset="0.041" stop-color="#0b23f6"/><stop offset="0.043" stop-color="#0b24fb"/><stop offset="0.052" stop-color="#0b26fb"/><stop offset="0.063" stop-color="#0d38fb"/><stop offset="0.117" stop-color="#1fb9fc"/><stop offset="0.135" stop-color="#25ddfc"/><stop offset="0.152" stop-color="#2efee2"/><stop offset="0.183" stop-color="#49feb9"/><stop offset="0.227" stop-color="#75fd8a"/><stop offset="0.274" stop-color="#9bfd66"/><stop offset="0.327" stop-color="#b8fd4e"/><stop offset="0.391" stop-color="#cdfd3f"/><stop offset="0.466" stop-color="#d7fd3b"/><stop offset="0.56" stop-color="#d2fd3d"/><stop offset="0.693" stop-color="#bbfd4c"/><stop offset="0.883" stop-color="#94fd6d"/><stop offset="0.987" stop-color="#8bfd75"/><stop offset="1" stop-color="#8afd75"/></linearGradient><linearGradient id="c63" x2="0" y2="1"><stop offset="0" stop-color="#06127e"/><stop offset="0.002" stop-color="#06127e"/><stop offset="0.037" stop-color="#0b24fb"/><stop offset="0.048" stop-color="#0b26fb"/><stop offset="0.059" stop-color="#0d3afb"/><stop offset="0.114" stop-color="#1fb9fc"/><stop offset="0.131" stop-color="#25ddfc"/><stop offset="0.15" stop-color="#2efee1"/><stop offset="0.183" stop-color="#4bfeb6"/><stop offset="0.228" stop-color="#78fd87"/><stop offset="0.276" stop-color="#9cfd65"/><stop offset="0.329" stop-color="#b9fd4d"/><stop offset="0.394" stop-color="#cefd3f"/><stop offset="0.471" stop-color="#d6fd3b"/><stop offset="0.566" stop-color="#d1fd3d"/><stop offset="0.701" stop-color="#b9fd4d"/><stop offset="0.885" stop-color="#93fd6d"/><stop offset="0.99" stop-color="#8bfd75"/><stop offset="1" stop-color="#8bfd75"/></linearGradient><linearGradient id="c64" x2="0" y2="1"><stop offset="0" stop-color="#06148b"/><stop offset="0.031" stop-color="#0b24f9"/><stop offset="0.038" stop-color="#0b24fb"/><stop offset="0.047" stop-color="#0c2bfb"/><stop offset="0.065" stop-color="#1053fb"/><stop offset="0.11" stop-color="#1fbafc"/><stop offset="0.128" stop-color="#25ddfc"/><stop offset="0.147" stop-color="#2efee1"/><stop offset="0.179" stop-color="#4bfeb7"/><stop offset="0.224" stop-color="#77fd89"/><stop offset="0.273" stop-color="#9cfd65"/><stop offset="0.327" stop-color="#b8fd4d"/><stop offset="0.392" stop-color="#cdfd40"/><stop offset="0.469" stop-color="#d6fd3b"/><stop offset="0.565" stop-color="#d1fd3d"/><stop offset="0.7" stop-color="#b9fd4d"/><stop offset="0.885" stop-color="#94fd6d"/><stop offset="0.991" stop-color="#8bfd75"/><stop offset="1" stop-color="#8bfd75"/></linearGradient><linearGradient id="c65" x2="0" y2="1"><stop offset="0" stop-color="#0717a1"/><stop offset="0.026" stop-color="#0b24f9"/><stop offset="0.029" stop-color="#0b24fb"/><stop offset="0.038" stop-color="#0b28fb"/><stop offset="0.051" stop-color="#0e3ffb"/><stop offset="0.106" stop-color="#1fb9fc"/><stop offset="0.123" stop-color="#25dcfd"/><stop offset="0.142" stop-color="#2dfee2"/><stop offset="0.173" stop-color="#48feba"/><stop offset="0.22" stop-color="#75fd8b"/><stop offset="0.269" stop-color="#9afd67"/><stop offset="0.323" stop-color="#b7fd4e"/><stop offset="0.39" stop-color="#ccfd40"/><stop offset="0.467" stop-color="#d5fd3b"/><stop offset="0.564" stop-color="#d0fd3e"/><stop offset="0.7" stop-color="#b9fd4d"/><stop offset="0.886" stop-color="#93fd6d"/><stop offset="0.992" stop-color="#8bfd75"/><stop offset="1" stop-color="#8bfd75"/></linearGradient><linearGradient id="c66" x2="0" y2="1"><stop offset="0" stop-color="#081bb9"/><stop offset="0.02" stop-color="#0b24fa"/><stop offset="0.031" stop-color="#0b27fb"/><stop offset="0.043" stop-color="#0d39fb"/><stop offset="0.102" stop-color="#1fbbfc"/><stop offset="0.12" stop-color="#25defb"/><stop offset="0.138" stop-color="#2efee1"/><stop offset="0.171" stop-color="#49feb9"/><stop offset="0.217" stop-color="#75fd8a"/><stop offset="0.267" stop-color="#9afd67"/><stop offset="0.323" stop-color="#b7fd4e"/><stop offset="0.391" stop-color="#ccfd40"/><stop offset="0.47" stop-color="#d5fd3b"/><stop offset="0.569" stop-color="#cffd3e"/><stop offset="0.707" stop-color="#b7fd4f"/><stop offset="0.887" stop-color="#93fd6d"/><stop offset="0.993" stop-color="#8bfd75"/><stop offset="1" stop-color="#8bfd75"/></linearGradient><linearGradient id="c67" x2="0" y2="1"><stop offset="0" stop-color="#091ed0"/><stop offset="0.014" stop-color="#0b24fb"/><stop offset="0.026" stop-color="#0b27fb"/><stop offset="0.038" stop-color="#0d3dfb"/><stop offset="0.098" stop-color="#20bcfc"/><stop offset="0.115" stop-color="#25defb"/><stop offset="0.134" stop-color="#2dfee2"/><stop offset="0.166" stop-color="#48feba"/><stop offset="0.214" stop-color="#74fd8b"/><stop offset="0.265" stop-color="#9afd67"/><stop offset="0.321" stop-color="#b7fd4f"/><stop offset="0.388" stop-color="#cbfd40"/><stop offset="0.467" stop-color="#d4fd3c"/><stop offset="0.566" stop-color="#cffd3e"/><stop offset="0.705" stop-color="#b7fd4e"/><stop offset="0.888" stop-color="#93fd6d"/><stop offset="0.994" stop-color="#8bfd75"/><stop offset="1" stop-color="#8bfd75"/></linearGradient><linearGradient id="c68" x2="0" y2="1"><stop offset="0" stop-color="#0a21e8"/><stop offset="0.006" stop-color="#0b24fa"/><stop offset="0.019" stop-color="#0b27fb"/><stop offset="0.031" stop-color="#0d3cfb"/><stop offset="0.092" stop-color="#1fbbfc"/><stop offset="0.109" stop-color="#25dcfd"/><stop offset="0.129" stop-color="#2dfee2"/><stop offset="0.162" stop-color="#48feba"/><stop offset="0.21" stop-color="#74fd8b"/><stop offset="0.262" stop-color="#99fd68"/><stop offset="0.319" stop-color="#b7fd4f"/><stop offset="0.387" stop-color="#cbfd41"/><stop offset="0.467" stop-color="#d4fd3c"/><stop offset="0.567" stop-color="#cffd3f"/><stop offset="0.707" stop-color="#b7fd4f"/><stop offset="0.89" stop-color="#93fd6d"/><stop offset="0.995" stop-color="#8bfd75"/><stop offset="1" stop-color="#8bfd75"/></linearGradient><linearGradient id="c69" x2="0" y2="1"><stop offset="0" stop-color="#0b24fb"/><stop offset="0.01" stop-color="#0b27fb"/><stop offset="0.023" stop-color="#0d3afb"/><stop offset="0.087" stop-color="#20befc"/><stop offset="0.105" stop-color="#25defb"/><stop offset="0.124" stop-color="#2efee1"/><stop offset="0.159" stop-color="#4afeb8"/><stop offset="0.209" stop-color="#76fd89"/><stop offset="0.262" stop-color="#9bfd66"/><stop offset="0.32" stop-color="#b8fd4e"/><stop offset="0.39" stop-color="#cbfd40"/><stop offset="0.472" stop-color="#d3fd3c"/><stop offset="0.574" stop-color="#cdfd3f"/><stop offset="0.717" stop-color="#b4fd51"/><stop offset="0.892" stop-color="#93fd6d"/><stop offset="0.998" stop-color="#8bfd74"/><stop offset="1" stop-color="#8bfd74"/></linearGradient><linearGradient id="c70" x2="0" y2="1"><stop offset="0" stop-color="#0b25fb"/><stop offset="0.012" stop-color="#0c34fb"/><stop offset="0.085" stop-color="#21c5fd"/><stop offset="0.099" stop-color="#25defb"/><stop offset="0.119" stop-color="#2efee2"/><stop offset="0.153" stop-color="#49feb9"/><stop offset="0.205" stop-color="#76fd8a"/><stop offset="0.258" stop-color="#9bfd66"/><stop offset="0.317" stop-color="#b7fd4e"/><stop offset="0.388" stop-color="#cbfd41"/><stop offset="0.472" stop-color="#d3fd3c"/><stop offset="0.576" stop-color="#cdfd40"/><stop offset="0.72" stop-color="#b3fd51"/><stop offset="0.893" stop-color="#93fd6e"/><stop offset="1" stop-color="#8cfd74"/></linearGradient><linearGradient id="c71" x2="0" y2="1"><stop offset="0" stop-color="#0c30fb"/><stop offset="0.034" stop-color="#1470fb"/><stop offset="0.084" stop-color="#23cffd"/><stop offset="0.092" stop-color="#25ddfc"/><stop offset="0.113" stop-color="#2efee1"/><stop offset="0.149" stop-color="#4afeb8"/><stop offset="0.201" stop-color="#76fd89"/><stop offset="0.256" stop-color="#9bfd66"/><stop offset="0.316" stop-color="#b8fd4e"/><stop offset="0.388" stop-color="#cbfd41"/><stop offset="0.473" stop-color="#d3fd3c"/><stop offset="0.578" stop-color="#ccfd40"/><stop offset="0.724" stop-color="#b2fd52"/><stop offset="0.895" stop-color="#93fd6e"/><stop offset="1" stop-color="#8cfd74"/></linearGradient><linearGradient id="c72" x2="0" y2="1"><stop offset="0" stop-color="#0e40fb"/><stop offset="0.069" stop-color="#20c2fd"/><stop offset="0.085" stop-color="#25ddfb"/><stop offset="0.106" stop-color="#2efee2"/><stop offset="0.142" stop-color="#48feb9"/><stop offset="0.195" stop-color="#75fd8a"/><stop offset="0.251" stop-color="#9bfd66"/><stop offset="0.313" stop-color="#b7fd4e"/><stop offset="0.386" stop-color="#cbfd41"/><stop offset="0.472" stop-color="#d2fd3d"/><stop offset="0.578" stop-color="#ccfd40"/><stop offset="0.726" stop-color="#b2fd53"/><stop offset="0.895" stop-color="#93fd6e"/><stop offset="1" stop-color="#8cfd74"/></linearGradient><linearGradient id="c73" x2="0" y2="1"><stop offset="0" stop-color="#1054fb"/><stop offset="0.063" stop-color="#21c6fd"/><stop offset="0.077" stop-color="#25ddfc"/><stop offset="0.099" stop-color="#2efee1"/><stop offset="0.136" stop-color="#49feb9"/><stop offset="0.191" stop-color="#76fd89"/><stop offset="0.248" stop-color="#9bfd66"/><stop offset="0.31" stop-color="#b8fd4e"/><stop offset="0.385" stop-color="#cbfd41"/><stop offset="0.472" stop-color="#d2fd3d"/><stop offset="0.579" stop-color="#cbfd40"/><stop offset="0.728" stop-color="#b1fd53"/><stop offset="0.897" stop-color="#93fd6e"/><stop offset="1" stop-color="#8cfd74"/></linearGradient><linearGradient id="c74" x2="0" y2="1"><stop offset="0" stop-color="#1369fb"/><stop offset="0.062" stop-color="#23d3fd"/><stop offset="0.069" stop-color="#25defb"/><stop offset="0.091" stop-color="#2efee2"/><stop offset="0.128" stop-color="#48feba"/><stop offset="0.184" stop-color="#75fd8a"/><stop offset="0.242" stop-color="#9afd67"/><stop offset="0.306" stop-color="#b7fd4f"/><stop offset="0.381" stop-color="#cafd41"/><stop offset="0.47" stop-color="#d2fd3d"/><stop offset="0.578" stop-color="#cbfd41"/><stop offset="0.728" stop-color="#b1fd53"/><stop offset="0.898" stop-color="#92fd6e"/><stop offset="1" stop-color="#8cfd74"/></linearGradient><linearGradient id="c75" x2="0" y2="1"><stop offset="0" stop-color="#167ffc"/><stop offset="0.058" stop-color="#25ddfc"/><stop offset="0.083" stop-color="#2efee1"/><stop offset="0.123" stop-color="#4bfeb7"/><stop offset="0.181" stop-color="#78fd88"/><stop offset="0.242" stop-color="#9dfd64"/><stop offset="0.308" stop-color="#b9fd4d"/><stop offset="0.386" stop-color="#cbfd40"/><stop offset="0.477" stop-color="#d2fd3d"/><stop offset="0.588" stop-color="#cafd42"/><stop offset="0.744" stop-color="#aefd56"/><stop offset="0.903" stop-color="#92fd6f"/><stop offset="1" stop-color="#8cfd74"/></linearGradient><linearGradient id="c76" x2="0" y2="1"><stop offset="0" stop-color="#1a96fc"/><stop offset="0.048" stop-color="#25defb"/><stop offset="0.072" stop-color="#2efee1"/><stop offset="0.113" stop-color="#49feb9"/><stop offset="0.173" stop-color="#77fd88"/><stop offset="0.235" stop-color="#9cfd65"/><stop offset="0.302" stop-color="#b8fd4d"/><stop offset="0.381" stop-color="#cbfd41"/><stop offset="0.473" stop-color="#d2fd3d"/><stop offset="0.586" stop-color="#cafd42"/><stop offset="0.742" stop-color="#aefd56"/><stop offset="0.902" stop-color="#92fd6e"/><stop offset="1" stop-color="#8cfd74"/></linearGradient><linearGradient id="c77" x2="0" y2="1"><stop offset="0" stop-color="#1dacfc"/><stop offset="0.035" stop-color="#25ddfb"/><stop offset="0.06" stop-color="#2efee1"/><stop offset="0.101" stop-color="#48febb"/><stop offset="0.165" stop-color="#76fd89"/><stop offset="0.229" stop-color="#9cfd65"/><stop offset="0.298" stop-color="#b8fd4e"/><stop offset="0.378" stop-color="#cbfd41"/><stop offset="0.471" stop-color="#d1fd3d"/><stop offset="0.585" stop-color="#c9fd42"/><stop offset="0.742" stop-color="#aefd56"/><stop offset="0.903" stop-color="#92fd6f"/><stop offset="1" stop-color="#8cfd74"/></linearGradient><linearGradient id="c78" x2="0" y2="1"><stop offset="0" stop-color="#21c3fd"/><stop offset="0.02" stop-color="#25ddfc"/><stop offset="0.048" stop-color="#2efee1"/><stop offset="0.091" stop-color="#48feba"/><stop offset="0.158" stop-color="#77fd88"/><stop offset="0.224" stop-color="#9dfd64"/><stop offset="0.295" stop-color="#b9fd4d"/><stop offset="0.378" stop-color="#cbfd40"/><stop offset="0.473" stop-color="#d1fd3d"/><stop offset="0.59" stop-color="#c8fd42"/><stop offset="0.75" stop-color="#acfd57"/><stop offset="0.907" stop-color="#91fd6f"/><stop offset="1" stop-color="#8cfd74"/></linearGradient><linearGradient id="c79" x2="0" y2="1"><stop offset="0" stop-color="#24dbfd"/><stop offset="0.033" stop-color="#2efee1"/><stop offset="0.078" stop-color="#48feba"/><stop offset="0.151" stop-color="#79fd86"/><stop offset="0.221" stop-color="#9ffd63"/><stop offset="0.294" stop-color="#bafd4c"/><stop offset="0.379" stop-color="#ccfd40"/><stop offset="0.477" stop-color="#d1fd3d"/><stop offset="0.595" stop-color="#c7fd43"/><stop offset="0.762" stop-color="#aafd59"/><stop offset="0.912" stop-color="#91fd6f"/><stop offset="1" stop-color="#8cfd74"/></linearGradient><linearGradient id="c80" x2="0" y2="1"><stop offset="0" stop-color="#29f2ec"/><stop offset="0.014" stop-color="#2efee1"/><stop offset="0.062" stop-color="#47febb"/><stop offset="0.143" stop-color="#7bfd85"/><stop offset="0.216" stop-color="#a0fd61"/><stop offset="0.293" stop-color="#bcfd4b"/><stop offset="0.38" stop-color="#cdfd40"/><stop offset="0.48" stop-color="#d1fd3d"/><stop offset="0.602" stop-color="#c6fd44"/><stop offset="0.778" stop-color="#a6fd5c"/><stop offset="0.92" stop-color="#90fd70"/><stop offset="1" stop-color="#8cfd74"/></linearGradient><linearGradient id="c81" x2="0" y2="1"><stop offset="0" stop-color="#32fed9"/><stop offset="0.065" stop-color="#54fead"/><stop offset="0.152" stop-color="#86fd79"/><stop offset="0.23" stop-color="#aafd59"/><stop offset="0.313" stop-color="#c2fd46"/><stop offset="0.406" stop-color="#cffd3e"/><stop offset="0.513" stop-color="#cffd3e"/><stop offset="0.647" stop-color="#bffd48"/><stop offset="0.893" stop-color="#93fd6d"/><stop offset="1" stop-color="#8cfd74"/></linearGradient><linearGradient id="c82" x2="0" y2="1"><stop offset="0" stop-color="#3efec7"/><stop offset="0.131" stop-color="#82fd7d"/><stop offset="0.215" stop-color="#a8fd5b"/><stop offset="0.3" stop-color="#c1fd47"/><stop offset="0.394" stop-color="#cffd3e"/><stop offset="0.502" stop-color="#d0fd3e"/><stop offset="0.635" stop-color="#c1fd47"/><stop offset="0.894" stop-color="#93fd6d"/><stop offset="1" stop-color="#8cfd74"/></linearGradient><linearGradient id="c83" x2="0" y2="1"><stop offset="0" stop-color="#4dfeb4"/><stop offset="0.155" stop-color="#94fd6c"/><stop offset="0.243" stop-color="#b4fd51"/><stop offset="0.337" stop-color="#c9fd42"/><stop offset="0.44" stop-color="#d1fd3d"/><stop offset="0.558" stop-color="#cbfd41"/><stop offset="0.713" stop-color="#b3fd52"/><stop offset="0.897" stop-color="#93fd6e"/><stop offset="1" stop-color="#8cfd74"/></linearGradient><linearGradient id="c84" x2="0" y2="1"><stop offset="0" stop-color="#5efea1"/><stop offset="0.18" stop-color="#a4fd5e"/><stop offset="0.276" stop-color="#c0fd48"/><stop offset="0.376" stop-color="#cffd3f"/><stop offset="0.486" stop-color="#d1fd3e"/><stop offset="0.617" stop-color="#c3fd46"/><stop offset="0.897" stop-color="#93fd6e"/><stop offset="1" stop-color="#8cfd74"/></linearGradient><linearGradient id="c85" x2="0" y2="1"><stop offset="0" stop-color="#70fd8f"/><stop offset="0.116" stop-color="#94fd6c"/><stop offset="0.229" stop-color="#b7fd4e"/><stop offset="0.334" stop-color="#cbfd40"/><stop offset="0.443" stop-color="#d2fd3d"/><stop offset="0.567" stop-color="#cafd41"/><stop offset="0.728" stop-color="#affd55"/><stop offset="0.901" stop-color="#92fd6e"/><stop offset="1" stop-color="#8cfd74"/></linearGradient><linearGradient id="c86" x2="0" y2="1"><stop offset="0" stop-color="#82fd7d"/><stop offset="0.09" stop-color="#95fd6b"/><stop offset="0.233" stop-color="#bcfd4b"/><stop offset="0.344" stop-color="#cefd3f"/><stop offset="0.459" stop-color="#d2fd3d"/><stop offset="0.591" stop-color="#c7fd43"/><stop offset="0.765" stop-color="#a8fd5b"/><stop offset="0.915" stop-color="#91fd70"/><stop offset="1" stop-color="#8cfd74"/></linearGradient><linearGradient id="c87" x2="0" y2="1"><stop offset="0" stop-color="#95fd6c"/><stop offset="0.076" stop-color="#9dfd64"/><stop offset="0.258" stop-color="#c4fd45"/><stop offset="0.376" stop-color="#d1fd3d"/><stop offset="0.498" stop-color="#d0fd3e"/><stop offset="0.641" stop-color="#bffd49"/><stop offset="0.894" stop-color="#93fd6e"/><stop offset="1" stop-color="#8cfd74"/></linearGradient><linearGradient id="c88" x2="0" y2="1"><stop offset="0" stop-color="#a8fd5b"/><stop offset="0.067" stop-color="#a8fd5b"/><stop offset="0.297" stop-color="#ccfd40"/><stop offset="0.42" stop-color="#d3fd3c"/><stop offset="0.551" stop-color="#cbfd41"/><stop offset="0.712" stop-color="#b2fd52"/><stop offset="0.898" stop-color="#92fd6e"/><stop offset="1" stop-color="#8cfd74"/></linearGradient><linearGradient id="c89" x2="0" y2="1"><stop offset="0" stop-color="#bbfd4c"/><stop offset="0.062" stop-color="#b4fd51"/><stop offset="0.164" stop-color="#bdfd4a"/><stop offset="0.335" stop-color="#d1fd3d"/><stop offset="0.464" stop-color="#d2fd3d"/><stop offset="0.605" stop-color="#c4fd45"/><stop offset="0.809" stop-color="#a0fd62"/><stop offset="0.941" stop-color="#8efd72"/><stop offset="1" stop-color="#8cfd74"/></linearGradient><linearGradient id="c90" x2="0" y2="1"><stop offset="0" stop-color="#cefd3f"/><stop offset="0.057" stop-color="#c1fd47"/><stop offset="0.14" stop-color="#c1fd47"/><stop offset="0.358" stop-color="#d3fd3c"/><stop offset="0.494" stop-color="#d0fd3e"/><stop offset="0.644" stop-color="#befd49"/><stop offset="0.894" stop-color="#93fd6e"/><stop offset="1" stop-color="#8cfd74"/></linearGradient><linearGradient id="c91" x2="0" y2="1"><stop offset="0" stop-color="#e0fd37"/><stop offset="0.052" stop-color="#cffd3e"/><stop offset="0.124" stop-color="#c8fd42"/><stop offset="0.393" stop-color="#d4fd3c"/><stop offset="0.535" stop-color="#cdfd40"/><stop offset="0.697" stop-color="#b5fd50"/><stop offset="0.895" stop-color="#93fd6e"/><stop offset="1" stop-color="#8cfd74"/></linearGradient><linearGradient id="c92" x2="0" y2="1"><stop offset="0" stop-color="#f3f733"/><stop offset="0.013" stop-color="#ecfd35"/><stop offset="0.065" stop-color="#d9fd39"/><stop offset="0.136" stop-color="#d0fd3e"/><stop offset="0.422" stop-color="#d4fd3c"/><stop offset="0.57" stop-color="#c8fd42"/><stop offset="0.742" stop-color="#acfd57"/><stop offset="0.907" stop-color="#91fd6f"/><stop offset="1" stop-color="#8cfd74"/></linearGradient><linearGradient id="c93" x2="0" y2="1"><stop offset="0" stop-color="#fee130"/><stop offset="0.016" stop-color="#fbed32"/><stop offset="0.047" stop-color="#edfd35"/><stop offset="0.106" stop-color="#dcfd38"/><stop offset="0.194" stop-color="#d5fd3b"/><stop offset="0.435" stop-color="#d4fd3c"/><stop offset="0.588" stop-color="#c6fd44"/><stop offset="0.776" stop-color="#a5fd5d"/><stop offset="0.922" stop-color="#90fd70"/><stop offset="1" stop-color="#8cfd74"/></linearGradient><linearGradient id="c94" x2="0" y2="1"><stop offset="0" stop-color="#fdcb2d"/><stop offset="0.042" stop-color="#fdec32"/><stop offset="0.079" stop-color="#edfd35"/><stop offset="0.145" stop-color="#defd38"/><stop offset="0.262" stop-color="#d8fd3a"/><stop offset="0.464" stop-color="#d3fd3c"/><stop offset="0.623" stop-color="#c1fd47"/><stop offset="0.895" stop-color="#92fd6e"/><stop offset="1" stop-color="#8cfd74"/></linearGradient><linearGradient id="c95" x2="0" y2="1"><stop offset="0" stop-color="#fdb52a"/><stop offset="0.04" stop-color="#fdd92f"/><stop offset="0.07" stop-color="#fced32"/><stop offset="0.11" stop-color="#edfd35"/><stop offset="0.186" stop-color="#dffd37"/><stop offset="0.495" stop-color="#d0fd3e"/><stop offset="0.664" stop-color="#bafd4c"/><stop offset="0.893" stop-color="#93fd6e"/><stop offset="1" stop-color="#8cfd74"/></linearGradient><linearGradient id="c96" x2="0" y2="1"><stop offset="0" stop-color="#fda027"/><stop offset="0.038" stop-color="#fdc72d"/><stop offset="0.083" stop-color="#fee631"/><stop offset="0.1" stop-color="#faef32"/><stop offset="0.142" stop-color="#edfd35"/><stop offset="0.229" stop-color="#e0fd37"/><stop offset="0.508" stop-color="#cffd3e"/><stop offset="0.677" stop-color="#b7fd4e"/><stop offset="0.893" stop-color="#93fd6e"/><stop offset="1" stop-color="#8cfd74"/></linearGradient><linearGradient id="c97" x2="0" y2="1"><stop offset="0" stop-color="#fd8a24"/><stop offset="0.037" stop-color="#fdb62a"/><stop offset="0.08" stop-color="#fdd82f"/><stop offset="0.117" stop-color="#fced32"/><stop offset="0.169" stop-color="#edfd35"/><stop offset="0.269" stop-color="#e0fd37"/><stop offset="0.524" stop-color="#cefd3f"/><stop offset="0.695" stop-color="#b4fd51"/><stop offset="0.895" stop-color="#92fd6e"/><stop offset="1" stop-color="#8cfd74"/></linearGradient><linearGradient id="c98" x2="0" y2="1"><stop offset="0" stop-color="#fc7522"/><stop offset="0.035" stop-color="#fda227"/><stop offset="0.076" stop-color="#fdc82d"/><stop offset="0.124" stop-color="#fee631"/><stop offset="0.144" stop-color="#faef32"/><stop offset="0.195" stop-color="#edfd35"/><stop offset="0.31" stop-color="#dffd37"/><stop offset="0.545" stop-color="#cbfd41"/><stop offset="0.72" stop-color="#affd55"/><stop offset="0.901" stop-color="#92fd6f"/><stop offset="1" stop-color="#8cfd74"/></linearGradient><linearGradient id="c99" x2="0" y2="1"><stop offset="0" stop-color="#fc601f"/><stop offset="0.035" stop-color="#fd9125"/><stop offset="0.074" stop-color="#fdba2b"/><stop offset="0.121" stop-color="#fddb2f"/><stop offset="0.158" stop-color="#fced32"/><stop offset="0.216" stop-color="#edfd35"/><stop offset="0.345" stop-color="#defd38"/><stop offset="0.569" stop-color="#c8fd42"/><stop offset="0.753" stop-color="#a9fd5a"/><stop offset="0.913" stop-color="#90fd70"/><stop offset="1" stop-color="#8cfd74"/></linearGradient><linearGradient id="c100" x2="0" y2="1"><stop offset="0" stop-color="#fc4b1e"/><stop offset="0.034" stop-color="#fc7f23"/><stop offset="0.072" stop-color="#fdab28"/><stop offset="0.116" stop-color="#fdcf2e"/><stop offset="0.171" stop-color="#feeb32"/><stop offset="0.235" stop-color="#edfd35"/><stop offset="0.377" stop-color="#dcfd38"/><stop offset="0.59" stop-color="#c5fd44"/><stop offset="0.801" stop-color="#a0fd61"/><stop offset="0.937" stop-color="#8efd72"/><stop offset="1" stop-color="#8cfd74"/></linearGradient><linearGradient id="c101" x2="0" y2="1"><stop offset="0" stop-color="#fc371c"/><stop offset="0.034" stop-color="#fc6e21"/><stop offset="0.071" stop-color="#fd9d26"/><stop offset="0.114" stop-color="#fdc32c"/><stop offset="0.165" stop-color="#fee231"/><stop offset="0.193" stop-color="#fced32"/><stop offset="0.253" stop-color="#edfd35"/><stop offset="0.415" stop-color="#d9fd39"/><stop offset="0.614" stop-color="#c1fd47"/><stop offset="0.893" stop-color="#92fd6e"/><stop offset="1" stop-color="#8cfd74"/></linearGradient><linearGradient id="c102" x2="0" y2="1"><stop offset="0" stop-color="#fc231c"/><stop offset="0.035" stop-color="#fc601f"/><stop offset="0.071" stop-color="#fd9025"/><stop offset="0.113" stop-color="#fdb92a"/><stop offset="0.163" stop-color="#fdda2f"/><stop offset="0.206" stop-color="#fced32"/><stop offset="0.269" stop-color="#edfd35"/><stop offset="0.448" stop-color="#d7fd3b"/><stop offset="0.637" stop-color="#befd4a"/><stop offset="0.892" stop-color="#93fd6e"/><stop offset="1" stop-color="#8cfd74"/></linearGradient><linearGradient id="c103" x2="0" y2="1"><stop offset="0" stop-color="#f5111a"/><stop offset="0.003" stop-color="#fc171b"/><stop offset="0.042" stop-color="#fc5b1f"/><stop offset="0.078" stop-color="#fd8c24"/><stop offset="0.12" stop-color="#fdb52a"/><stop offset="0.17" stop-color="#fdd72f"/><stop offset="0.219" stop-color="#fcec32"/><stop offset="0.281" stop-color="#edfd35"/><stop offset="0.474" stop-color="#d4fd3c"/><stop offset="0.659" stop-color="#bafd4c"/><stop offset="0.892" stop-color="#92fd6e"/><stop offset="1" stop-color="#8cfd74"/></linearGradient><linearGradient id="c104" x2="0" y2="1"><stop offset="0" stop-color="#dc0b18"/><stop offset="0.008" stop-color="#f2101a"/><stop offset="0.012" stop-color="#fc161b"/><stop offset="0.051" stop-color="#fc5b1f"/><stop offset="0.087" stop-color="#fd8b24"/><stop offset="0.129" stop-color="#fdb42a"/><stop offset="0.179" stop-color="#fdd62f"/><stop offset="0.23" stop-color="#fcec32"/><stop offset="0.293" stop-color="#edfd35"/><stop offset="0.502" stop-color="#d1fd3d"/><stop offset="0.685" stop-color="#b5fd50"/><stop offset="0.893" stop-color="#92fd6e"/><stop offset="1" stop-color="#8cfd74"/></linearGradient><linearGradient id="c105" x2="0" y2="1"><stop offset="0" stop-color="#c40a15"/><stop offset="0.015" stop-color="#ef0e1a"/><stop offset="0.021" stop-color="#fc171b"/><stop offset="0.059" stop-color="#fc591f"/><stop offset="0.097" stop-color="#fd8b24"/><stop offset="0.138" stop-color="#fdb32a"/><stop offset="0.19" stop-color="#fdd62f"/><stop offset="0.241" stop-color="#fcec32"/><stop offset="0.303" stop-color="#edfd35"/><stop offset="0.535" stop-color="#cdfd40"/><stop offset="0.72" stop-color="#affd55"/><stop offset="0.901" stop-color="#91fd6f"/><stop offset="1" stop-color="#8cfd74"/></linearGradient><linearGradient id="c106" x2="0" y2="1"><stop offset="0" stop-color="#ad0913"/><stop offset="0.023" stop-color="#ef0e1a"/><stop offset="0.029" stop-color="#fc171b"/><stop offset="0.069" stop-color="#fc5b1f"/><stop offset="0.106" stop-color="#fd8b24"/><stop offset="0.149" stop-color="#fdb52a"/><stop offset="0.2" stop-color="#fdd62f"/><stop offset="0.251" stop-color="#fced32"/><stop offset="0.312" stop-color="#edfd35"/><stop offset="0.528" stop-color="#cefd3f"/><stop offset="0.714" stop-color="#b0fd54"/><stop offset="0.899" stop-color="#92fd6f"/><stop offset="1" stop-color="#8cfd74"/></linearGradient><linearGradient id="c107" x2="0" y2="1"><stop offset="0" stop-color="#950810"/><stop offset="0.024" stop-color="#de0b18"/><stop offset="0.031" stop-color="#f10f1a"/><stop offset="0.036" stop-color="#fc161b"/><stop offset="0.076" stop-color="#fc591f"/><stop offset="0.113" stop-color="#fd8a24"/><stop offset="0.156" stop-color="#fdb32a"/><stop offset="0.208" stop-color="#fdd62f"/><stop offset="0.259" stop-color="#fced32"/><stop offset="0.32" stop-color="#edfd35"/><stop offset="0.534" stop-color="#cdfd3f"/><stop offset="0.722" stop-color="#aefd56"/><stop offset="0.901" stop-color="#91fd6f"/><stop offset="1" stop-color="#8cfd74"/></linearGradient><linearGradient id="c108" x2="0" y2="1"><stop offset="0" stop-color="#7e060e"/><stop offset="0.024" stop-color="#cb0a16"/><stop offset="0.037" stop-color="#ed0e1a"/><stop offset="0.043" stop-color="#fc161b"/><stop offset="0.084" stop-color="#fc5b1f"/><stop offset="0.121" stop-color="#fd8b24"/><stop offset="0.164" stop-color="#fdb32a"/><stop offset="0.216" stop-color="#fdd62f"/><stop offset="0.267" stop-color="#fced32"/><stop offset="0.327" stop-color="#edfd35"/><stop offset="0.533" stop-color="#cdfd3f"/><stop offset="0.722" stop-color="#aefd56"/><stop offset="0.901" stop-color="#91fd6f"/><stop offset="1" stop-color="#8cfd74"/></linearGradient><linearGradient id="c109" x2="0" y2="1"><stop offset="0" stop-color="#7e060e"/><stop offset="0.007" stop-color="#80070e"/><stop offset="0.031" stop-color="#cc0a16"/><stop offset="0.044" stop-color="#ee0e1a"/><stop offset="0.05" stop-color="#fc171b"/><stop offset="0.091" stop-color="#fc5b1f"/><stop offset="0.129" stop-color="#fd8c24"/><stop offset="0.173" stop-color="#fdb52a"/><stop offset="0.227" stop-color="#fdd72f"/><stop offset="0.274" stop-color="#fcec32"/><stop offset="0.334" stop-color="#edfd35"/><stop offset="0.536" stop-color="#cdfd40"/><stop offset="0.729" stop-color="#adfd57"/><stop offset="0.903" stop-color="#91fd6f"/><stop offset="1" stop-color="#8cfd74"/></linearGradient><linearGradient id="c110" x2="0" y2="1"><stop offset="0" stop-color="#7e060e"/><stop offset="0.013" stop-color="#7f060e"/><stop offset="0.037" stop-color="#cb0a16"/><stop offset="0.051" stop-color="#f00f1a"/><stop offset="0.056" stop-color="#fc161b"/><stop offset="0.097" stop-color="#fc5a1f"/><stop offset="0.135" stop-color="#fd8b24"/><stop offset="0.179" stop-color="#fdb42a"/><stop offset="0.233" stop-color="#fdd72f"/><stop offset="0.281" stop-color="#fced32"/><stop offset="0.34" stop-color="#edfd35"/><stop offset="0.535" stop-color="#cdfd3f"/><stop offset="0.729" stop-color="#adfd57"/><stop offset="0.903" stop-color="#91fd6f"/><stop offset="1" stop-color="#8cfd74"/></linearGradient><linearGradient id="c111" x2="0" y2="1"><stop offset="0" stop-color="#7e060e"/><stop offset="0.019" stop-color="#7f060e"/><stop offset="0.043" stop-color="#ca0a16"/><stop offset="0.057" stop-color="#f00f1a"/><stop offset="0.063" stop-color="#fc171b"/><stop offset="0.102" stop-color="#fc591f"/><stop offset="0.141" stop-color="#fd8a24"/><stop offset="0.185" stop-color="#fdb42a"/><stop offset="0.238" stop-color="#fdd72f"/><stop offset="0.288" stop-color="#fced32"/><stop offset="0.345" stop-color="#edfd35"/><stop offset="0.537" stop-color="#cdfd40"/><stop offset="0.734" stop-color="#acfd58"/><stop offset="0.905" stop-color="#91fd70"/><stop offset="1" stop-color="#8cfd74"/></linearGradient><linearGradient id="c112" x2="0" y2="1"><stop offset="0" stop-color="#7e060e"/><stop offset="0.023" stop-color="#7e060e"/><stop offset="0.052" stop-color="#d50b17"/><stop offset="0.063" stop-color="#f00f1a"/><stop offset="0.067" stop-color="#fc161b"/><stop offset="0.108" stop-color="#fc591f"/><stop offset="0.147" stop-color="#fd8a24"/><stop offset="0.191" stop-color="#fdb32a"/><stop offset="0.244" stop-color="#fdd62f"/><stop offset="0.293" stop-color="#fcec32"/><stop offset="0.35" stop-color="#edfd35"/><stop offset="0.535" stop-color="#cdfd3f"/><stop offset="0.733" stop-color="#acfd58"/><stop offset="0.905" stop-color="#91fd70"/><stop offset="1" stop-color="#8cfd74"/></linearGradient><linearGradient id="c113" x2="0" y2="1"><stop offset="0" stop-color="#7e060e"/><stop offset="0.029" stop-color="#7f060e"/><stop offset="0.053" stop-color="#c90a16"/><stop offset="0.067" stop-color="#ef0e1a"/><stop offset="0.073" stop-color="#fc171b"/><stop offset="0.114" stop-color="#fc5a1f"/><stop offset="0.152" stop-color="#fd8a24"/><stop offset="0.198" stop-color="#fdb42a"/><stop offset="0.252" stop-color="#fdd82f"/><stop offset="0.299" stop-color="#fced32"/><stop offset="0.355" stop-color="#edfd35"/><stop offset="0.535" stop-color="#cdfd3f"/><stop offset="0.735" stop-color="#abfd58"/><stop offset="0.905" stop-color="#91fd70"/><stop offset="1" stop-color="#8cfd74"/></linearGradient><linearGradient id="c114" x2="0" y2="1"><stop offset="0" stop-color="#7e060e"/><stop offset="0.034" stop-color="#7e060e"/><stop offset="0.058" stop-color="#c90a16"/><stop offset="0.072" stop-color="#ee0e1a"/><stop offset="0.078" stop-color="#fc161b"/><stop offset="0.12" stop-color="#fc5b1f"/><stop offset="0.159" stop-color="#fd8c24"/><stop offset="0.205" stop-color="#fdb62a"/><stop offset="0.259" stop-color="#fdd92f"/><stop offset="0.303" stop-color="#fced32"/><stop offset="0.359" stop-color="#edfd35"/><stop offset="0.537" stop-color="#cdfd3f"/><stop offset="0.74" stop-color="#aafd59"/><stop offset="0.907" stop-color="#90fd70"/><stop offset="1" stop-color="#8bfd74"/></linearGradient><linearGradient id="c115" x2="0" y2="1"><stop offset="0" stop-color="#7e060e"/><stop offset="0.038" stop-color="#7e060e"/><stop offset="0.063" stop-color="#c90a16"/><stop offset="0.077" stop-color="#ee0e1a"/><stop offset="0.083" stop-color="#fc161b"/><stop offset="0.124" stop-color="#fc5a1f"/><stop offset="0.164" stop-color="#fd8c24"/><stop offset="0.209" stop-color="#fdb62a"/><stop offset="0.265" stop-color="#fdd92f"/><stop offset="0.308" stop-color="#fced32"/><stop offset="0.363" stop-color="#edfd35"/><stop offset="0.536" stop-color="#cdfd3f"/><stop offset="0.74" stop-color="#aafd59"/><stop offset="0.907" stop-color="#90fd70"/><stop offset="1" stop-color="#8bfd74"/></linearGradient><linearGradient id="c116" x2="0" y2="1"><stop offset="0" stop-color="#7e060e"/><stop offset="0.043" stop-color="#7f060e"/><stop offset="0.069" stop-color="#cc0a16"/><stop offset="0.081" stop-color="#ee0e1a"/><stop offset="0.087" stop-color="#fc161b"/><stop offset="0.129" stop-color="#fc5a1f"/><stop offset="0.169" stop-color="#fd8c24"/><stop offset="0.214" stop-color="#fdb62a"/><stop offset="0.27" stop-color="#fdd92f"/><stop offset="0.313" stop-color="#fced32"/><stop offset="0.366" stop-color="#edfd35"/><stop offset="0.535" stop-color="#cefd3f"/><stop offset="0.74" stop-color="#aafd59"/><stop offset="0.907" stop-color="#90fd70"/><stop offset="1" stop-color="#8bfd74"/></linearGradient><linearGradient id="c117" x2="0" y2="1"><stop offset="0" stop-color="#7e060e"/><stop offset="0.047" stop-color="#7e060e"/><stop offset="0.074" stop-color="#d10b16"/><stop offset="0.086" stop-color="#ef0e1a"/><stop offset="0.092" stop-color="#fc171b"/><stop offset="0.133" stop-color="#fc591f"/><stop offset="0.172" stop-color="#fd8b24"/><stop offset="0.217" stop-color="#fdb52a"/><stop offset="0.273" stop-color="#fdd92f"/><stop offset="0.316" stop-color="#fced32"/><stop offset="0.37" stop-color="#edfd35"/><stop offset="0.536" stop-color="#cdfd3f"/><stop offset="0.743" stop-color="#aafd59"/><stop offset="0.908" stop-color="#90fd70"/><stop offset="1" stop-color="#8bfd75"/></linearGradient><linearGradient id="c118" x2="0" y2="1"><stop offset="0" stop-color="#7e060e"/><stop offset="0.05" stop-color="#7e060e"/><stop offset="0.081" stop-color="#d90b17"/><stop offset="0.091" stop-color="#f10f1a"/><stop offset="0.095" stop-color="#fc161b"/><stop offset="0.137" stop-color="#fc5a1f"/><stop offset="0.177" stop-color="#fd8c24"/><stop offset="0.222" stop-color="#fdb52a"/><stop offset="0.278" stop-color="#fdd92f"/><stop offset="0.32" stop-color="#fced32"/><stop offset="0.372" stop-color="#edfd35"/><stop offset="0.534" stop-color="#cefd3f"/><stop offset="0.742" stop-color="#aafd59"/><stop offset="0.908" stop-color="#90fd70"/><stop offset="1" stop-color="#8bfd75"/></linearGradient><linearGradient id="c119" x2="0" y2="1"><stop offset="0" stop-color="#7e060e"/><stop offset="0.055" stop-color="#7f070e"/><stop offset="0.08" stop-color="#cc0a16"/><stop offset="0.093" stop-color="#ee0e1a"/><stop offset="0.099" stop-color="#fc161b"/><stop offset="0.141" stop-color="#fc5a1f"/><stop offset="0.18" stop-color="#fd8b24"/><stop offset="0.227" stop-color="#fdb62a"/><stop offset="0.283" stop-color="#fdda2f"/><stop offset="0.323" stop-color="#fced32"/><stop offset="0.376" stop-color="#edfd35"/><stop offset="0.536" stop-color="#cefd3f"/><stop offset="0.748" stop-color="#a9fd5a"/><stop offset="0.91" stop-color="#90fd70"/><stop offset="1" stop-color="#8bfd75"/></linearGradient><linearGradient id="c120" x2="0" y2="1"><stop offset="0" stop-color="#7e060e"/><stop offset="0.058" stop-color="#80070e"/><stop offset="0.084" stop-color="#cc0a16"/><stop offset="0.097" stop-color="#ee0e1a"/><stop offset="0.102" stop-color="#fc161b"/><stop offset="0.144" stop-color="#fc5a1f"/><stop offset="0.184" stop-color="#fd8b24"/><stop offset="0.23" stop-color="#fdb62a"/><stop offset="0.286" stop-color="#fdda2f"/><stop offset="0.327" stop-color="#fced32"/><stop offset="0.378" stop-color="#edfd35"/><stop offset="0.536" stop-color="#cefd3f"/><stop offset="0.749" stop-color="#a8fd5a"/><stop offset="0.91" stop-color="#90fd70"/><stop offset="1" stop-color="#8bfd75"/></linearGradient><linearGradient id="c121" x2="0" y2="1"><stop offset="0" stop-color="#7e060e"/><stop offset="0.06" stop-color="#7e060e"/><stop offset="0.09" stop-color="#d30b17"/><stop offset="0.1" stop-color="#ee0e1a"/><stop offset="0.106" stop-color="#fc161b"/><stop offset="0.148" stop-color="#fc5a1f"/><stop offset="0.187" stop-color="#fd8b24"/><stop offset="0.234" stop-color="#fdb62a"/><stop offset="0.29" stop-color="#fdda2f"/><stop offset="0.329" stop-color="#fced32"/><stop offset="0.38" stop-color="#edfd35"/><stop offset="0.536" stop-color="#cefd3f"/><stop offset="0.751" stop-color="#a8fd5b"/><stop offset="0.912" stop-color="#90fd71"/><stop offset="1" stop-color="#8bfd75"/></linearGradient><linearGradient id="c122" x2="0" y2="1"><stop offset="0" stop-color="#7e060e"/><stop offset="0.064" stop-color="#7e060e"/><stop offset="0.09" stop-color="#cb0a16"/><stop offset="0.103" stop-color="#ef0e1a"/><stop offset="0.109" stop-color="#fc171b"/><stop offset="0.151" stop-color="#fc5b1f"/><stop offset="0.191" stop-color="#fd8c24"/><stop offset="0.237" stop-color="#fdb72a"/><stop offset="0.293" stop-color="#fdda2f"/><stop offset="0.333" stop-color="#fced32"/><stop offset="0.383" stop-color="#edfd35"/><stop offset="0.536" stop-color="#cefd3f"/><stop offset="0.752" stop-color="#a8fd5b"/><stop offset="0.912" stop-color="#90fd71"/><stop offset="1" stop-color="#8bfd75"/></linearGradient><linearGradient id="c123" x2="0" y2="1"><stop offset="0" stop-color="#7e060e"/><stop offset="0.066" stop-color="#7e060e"/><stop offset="0.095" stop-color="#d30b17"/><stop offset="0.106" stop-color="#ee0e1a"/><stop offset="0.112" stop-color="#fc161b"/><stop offset="0.153" stop-color="#fc5a1f"/><stop offset="0.193" stop-color="#fd8b24"/><stop offset="0.24" stop-color="#fdb62a"/><stop offset="0.295" stop-color="#fdda2f"/><stop offset="0.335" stop-color="#fced32"/><stop offset="0.385" stop-color="#edfd35"/><stop offset="0.537" stop-color="#cefd3f"/><stop offset="0.756" stop-color="#a7fd5c"/><stop offset="0.914" stop-color="#8ffd71"/><stop offset="1" stop-color="#8bfd75"/></linearGradient><linearGradient id="c124" x2="0" y2="1"><stop offset="0" stop-color="#7e060e"/><stop offset="0.07" stop-color="#80070e"/><stop offset="0.095" stop-color="#cc0a16"/><stop offset="0.109" stop-color="#f00f1a"/><stop offset="0.115" stop-color="#fc171b"/><stop offset="0.157" stop-color="#fc5b1f"/><stop offset="0.197" stop-color="#fd8c24"/><stop offset="0.243" stop-color="#fdb72a"/><stop offset="0.3" stop-color="#fddb30"/><stop offset="0.337" stop-color="#fced32"/><stop offset="0.387" stop-color="#edfd35"/><stop offset="0.538" stop-color="#cefd3f"/><stop offset="0.759" stop-color="#a6fd5c"/><stop offset="0.915" stop-color="#8ffd71"/><stop offset="1" stop-color="#8bfd75"/></linearGradient><linearGradient id="c125" x2="0" y2="1"><stop offset="0" stop-color="#7e060e"/><stop offset="0.072" stop-color="#7f060e"/><stop offset="0.098" stop-color="#cb0a16"/><stop offset="0.112" stop-color="#f00f1a"/><stop offset="0.117" stop-color="#fc171b"/><stop offset="0.159" stop-color="#fc5b1f"/><stop offset="0.199" stop-color="#fd8c24"/><stop offset="0.245" stop-color="#fdb72a"/><stop offset="0.302" stop-color="#fddb30"/><stop offset="0.338" stop-color="#fcec32"/><stop offset="0.388" stop-color="#edfd35"/><stop offset="0.537" stop-color="#cefd3f"/><stop offset="0.759" stop-color="#a6fd5c"/><stop offset="0.915" stop-color="#8ffd71"/><stop offset="1" stop-color="#8bfd75"/></linearGradient><linearGradient id="c126" x2="0" y2="1"><stop offset="0" stop-color="#7e060e"/><stop offset="0.074" stop-color="#7f060e"/><stop offset="0.1" stop-color="#cc0a16"/><stop offset="0.114" stop-color="#f00f1a"/><stop offset="0.12" stop-color="#fc171b"/><stop offset="0.162" stop-color="#fc5b1f"/><stop offset="0.201" stop-color="#fd8c24"/><stop offset="0.248" stop-color="#fdb72a"/><stop offset="0.305" stop-color="#fddc30"/><stop offset="0.341" stop-color="#fced32"/><stop offset="0.391" stop-color="#edfd35"/><stop offset="0.54" stop-color="#cefd3f"/><stop offset="0.765" stop-color="#a5fd5d"/><stop offset="0.917" stop-color="#8ffd71"/><stop offset="1" stop-color="#8bfd75"/></linearGradient><linearGradient id="c127" x2="0" y2="1"><stop offset="0" stop-color="#7e060e"/><stop offset="0.076" stop-color="#7e060e"/><stop offset="0.107" stop-color="#d90b17"/><stop offset="0.116" stop-color="#f00f1a"/><stop offset="0.121" stop-color="#fb161b"/><stop offset="0.164" stop-color="#fc5b1f"/><stop offset="0.203" stop-color="#fd8c24"/><stop offset="0.25" stop-color="#fdb72a"/><stop offset="0.307" stop-color="#fddc30"/><stop offset="0.343" stop-color="#fced32"/><stop offset="0.392" stop-color="#edfd35"/><stop offset="0.538" stop-color="#cefd3f"/><stop offset="0.765" stop-color="#a5fd5d"/><stop offset="0.917" stop-color="#8ffd71"/><stop offset="1" stop-color="#8bfd75"/></linearGradient><linearGradient id="c128" x2="0" y2="1"><stop offset="0" stop-color="#7e060e"/><stop offset="0.078" stop-color="#7e060e"/><stop offset="0.105" stop-color="#cd0a16"/><stop offset="0.117" stop-color="#ee0e1a"/><stop offset="0.123" stop-color="#fc161b"/><stop offset="0.165" stop-color="#fc5a1f"/><stop offset="0.205" stop-color="#fd8b24"/><stop offset="0.251" stop-color="#fdb62a"/><stop offset="0.308" stop-color="#fddb30"/><stop offset="0.344" stop-color="#fced32"/><stop offset="0.393" stop-color="#edfd35"/><stop offset="0.538" stop-color="#cefd3f"/><stop offset="0.766" stop-color="#a5fd5d"/><stop offset="0.919" stop-color="#8ffd71"/><stop offset="1" stop-color="#8bfd75"/></linearGradient><linearGradient id="c129" x2="0" y2="1"><stop offset="0" stop-color="#7e060e"/><stop offset="0.08" stop-color="#7f060e"/><stop offset="0.106" stop-color="#cb0a16"/><stop offset="0.12" stop-color="#f00f1a"/><stop offset="0.126" stop-color="#fc171b"/><stop offset="0.167" stop-color="#fc5b1f"/><stop offset="0.207" stop-color="#fd8c24"/><stop offset="0.253" stop-color="#fdb72a"/><stop offset="0.31" stop-color="#fedc30"/><stop offset="0.345" stop-color="#fcec32"/><stop offset="0.394" stop-color="#edfd35"/><stop offset="0.538" stop-color="#cefd3f"/><stop offset="0.767" stop-color="#a5fd5e"/><stop offset="0.919" stop-color="#8ffd71"/><stop offset="1" stop-color="#8bfd75"/></linearGradient><linearGradient id="c130" x2="0" y2="1"><stop offset="0" stop-color="#7e060e"/><stop offset="0.081" stop-color="#7e060e"/><stop offset="0.107" stop-color="#ca0a16"/><stop offset="0.121" stop-color="#ee0e1a"/><stop offset="0.127" stop-color="#fc161b"/><stop offset="0.169" stop-color="#fc5a1f"/><stop offset="0.208" stop-color="#fd8b24"/><stop offset="0.255" stop-color="#fdb62a"/><stop offset="0.312" stop-color="#fddc30"/><stop offset="0.348" stop-color="#fced32"/><stop offset="0.395" stop-color="#edfd35"/><stop offset="0.538" stop-color="#cefd3f"/><stop offset="0.769" stop-color="#a4fd5e"/><stop offset="0.92" stop-color="#8ffd71"/><stop offset="1" stop-color="#8bfd75"/></linearGradient><linearGradient id="c131" x2="0" y2="1"><stop offset="0" stop-color="#7e060e"/><stop offset="0.083" stop-color="#7e060e"/><stop offset="0.112" stop-color="#d30b17"/><stop offset="0.123" stop-color="#f00f1a"/><stop offset="0.128" stop-color="#fc161b"/><stop offset="0.171" stop-color="#fc5b1f"/><stop offset="0.212" stop-color="#fd8d25"/><stop offset="0.258" stop-color="#fdb82a"/><stop offset="0.315" stop-color="#fedd30"/><stop offset="0.349" stop-color="#fced32"/><stop offset="0.397" stop-color="#edfd35"/><stop offset="0.54" stop-color="#cefd3f"/><stop offset="0.772" stop-color="#a4fd5e"/><stop offset="0.921" stop-color="#8ffd72"/><stop offset="1" stop-color="#8bfd75"/></linearGradient><linearGradient id="c132" x2="0" y2="1"><stop offset="0" stop-color="#7e060e"/><stop offset="0.084" stop-color="#7e060e"/><stop offset="0.114" stop-color="#d50b17"/><stop offset="0.124" stop-color="#f00f1a"/><stop offset="0.13" stop-color="#fc181b"/><stop offset="0.172" stop-color="#fc5b1f"/><stop offset="0.213" stop-color="#fd8d24"/><stop offset="0.259" stop-color="#fdb82a"/><stop offset="0.316" stop-color="#fedd30"/><stop offset="0.35" stop-color="#fced32"/><stop offset="0.398" stop-color="#edfd35"/><stop offset="0.54" stop-color="#cefd3f"/><stop offset="0.774" stop-color="#a3fd5f"/><stop offset="0.923" stop-color="#8efd72"/><stop offset="1" stop-color="#8bfd75"/></linearGradient><linearGradient id="c133" x2="0" y2="1"><stop offset="0" stop-color="#7e060e"/><stop offset="0.085" stop-color="#7e060e"/><stop offset="0.115" stop-color="#d50b17"/><stop offset="0.126" stop-color="#f00f1a"/><stop offset="0.131" stop-color="#fc181b"/><stop offset="0.173" stop-color="#fc5b1f"/><stop offset="0.214" stop-color="#fd8d24"/><stop offset="0.26" stop-color="#fdb82a"/><stop offset="0.317" stop-color="#fedd30"/><stop offset="0.35" stop-color="#fcec32"/><stop offset="0.399" stop-color="#ecfd35"/><stop offset="0.541" stop-color="#cefd3f"/><stop offset="0.778" stop-color="#a3fd5f"/><stop offset="0.924" stop-color="#8efd72"/><stop offset="1" stop-color="#8bfd75"/></linearGradient><linearGradient id="c134" x2="0" y2="1"><stop offset="0" stop-color="#7e060e"/><stop offset="0.086" stop-color="#7e060e"/><stop offset="0.115" stop-color="#d30b17"/><stop offset="0.127" stop-color="#f00f1a"/><stop offset="0.131" stop-color="#fc161b"/><stop offset="0.174" stop-color="#fc5b1f"/><stop offset="0.215" stop-color="#fd8d25"/><stop offset="0.262" stop-color="#fdb82a"/><stop offset="0.319" stop-color="#fedd30"/><stop offset="0.351" stop-color="#fced32"/><stop offset="0.399" stop-color="#edfd35"/><stop offset="0.54" stop-color="#cefd3f"/><stop offset="0.776" stop-color="#a3fd5f"/><stop offset="0.923" stop-color="#8efd72"/><stop offset="1" stop-color="#8bfd75"/></linearGradient><linearGradient id="c135" x2="0" y2="1"><stop offset="0" stop-color="#7e060e"/><stop offset="0.087" stop-color="#7e060e"/><stop offset="0.113" stop-color="#ca0a16"/><stop offset="0.127" stop-color="#ee0e1a"/><stop offset="0.133" stop-color="#fc161b"/><stop offset="0.176" stop-color="#fc5b1f"/><stop offset="0.216" stop-color="#fd8e25"/><stop offset="0.263" stop-color="#fdb82a"/><stop offset="0.32" stop-color="#fedd30"/><stop offset="0.352" stop-color="#fced32"/><stop offset="0.4" stop-color="#edfd35"/><stop offset="0.541" stop-color="#cefd3f"/><stop offset="0.779" stop-color="#a2fd60"/><stop offset="0.926" stop-color="#8efd72"/><stop offset="1" stop-color="#8bfd75"/></linearGradient><linearGradient id="c136" x2="0" y2="1"><stop offset="0" stop-color="#7e060e"/><stop offset="0.088" stop-color="#7f070e"/><stop offset="0.114" stop-color="#cb0a16"/><stop offset="0.128" stop-color="#ef0e1a"/><stop offset="0.134" stop-color="#fc171b"/><stop offset="0.176" stop-color="#fc5a1f"/><stop offset="0.216" stop-color="#fd8d24"/><stop offset="0.263" stop-color="#fdb82a"/><stop offset="0.32" stop-color="#fedd30"/><stop offset="0.352" stop-color="#fced32"/><stop offset="0.4" stop-color="#edfd35"/><stop offset="0.54" stop-color="#cefd3f"/><stop offset="0.778" stop-color="#a3fd5f"/><stop offset="0.924" stop-color="#8efd72"/><stop offset="1" stop-color="#8bfd75"/></linearGradient><linearGradient id="c137" x2="0" y2="1"><stop offset="0" stop-color="#7e060e"/><stop offset="0.088" stop-color="#7e060e"/><stop offset="0.115" stop-color="#cd0a16"/><stop offset="0.128" stop-color="#ee0e1a"/><stop offset="0.134" stop-color="#fc161b"/><stop offset="0.177" stop-color="#fc5b1f"/><stop offset="0.217" stop-color="#fd8e25"/><stop offset="0.264" stop-color="#fdb82a"/><stop offset="0.321" stop-color="#fedd30"/><stop offset="0.353" stop-color="#fced32"/><stop offset="0.4" stop-color="#edfd35"/><stop offset="0.54" stop-color="#cefd3f"/><stop offset="0.778" stop-color="#a3fd5f"/><stop offset="0.924" stop-color="#8efd72"/><stop offset="1" stop-color="#8bfd75"/></linearGradient><linearGradient id="c138" x2="0" y2="1"><stop offset="0" stop-color="#7e060e"/><stop offset="0.088" stop-color="#7e060e"/><stop offset="0.12" stop-color="#d80b17"/><stop offset="0.129" stop-color="#f00f1a"/><stop offset="0.135" stop-color="#fc171b"/><stop offset="0.177" stop-color="#fc5b1f"/><stop offset="0.217" stop-color="#fd8d24"/><stop offset="0.264" stop-color="#fdb82a"/><stop offset="0.321" stop-color="#fedd30"/><stop offset="0.353" stop-color="#fced32"/><stop offset="0.401" stop-color="#edfd35"/><stop offset="0.541" stop-color="#cefd3f"/><stop offset="0.781" stop-color="#a2fd60"/><stop offset="0.927" stop-color="#8efd72"/><stop offset="1" stop-color="#8bfd75"/></linearGradient><linearGradient id="c139" x2="0" y2="1"><stop offset="0" stop-color="#7e060e"/><stop offset="0.09" stop-color="#7f060e"/><stop offset="0.115" stop-color="#cb0a16"/><stop offset="0.129" stop-color="#ef0e1a"/><stop offset="0.135" stop-color="#fc171b"/><stop offset="0.177" stop-color="#fc5a1f"/><stop offset="0.217" stop-color="#fd8d24"/><stop offset="0.264" stop-color="#fdb82a"/><stop offset="0.321" stop-color="#fedd30"/><stop offset="0.353" stop-color="#fced32"/><stop offset="0.401" stop-color="#edfd35"/><stop offset="0.541" stop-color="#cefd3f"/><stop offset="0.781" stop-color="#a2fd60"/><stop offset="0.927" stop-color="#8efd72"/><stop offset="1" stop-color="#8bfd75"/></linearGradient><linearGradient id="c140" x2="0" y2="1"><stop offset="0" stop-color="#7e060e"/><stop offset="0.09" stop-color="#7f060e"/><stop offset="0.115" stop-color="#cb0a16"/><stop offset="0.129" stop-color="#ef0e1a"/><stop offset="0.135" stop-color="#fc171b"/><stop offset="0.177" stop-color="#fc5a1f"/><stop offset="0.217" stop-color="#fd8d24"/><stop offset="0.264" stop-color="#fdb82a"/><stop offset="0.321" stop-color="#fedd30"/><stop offset="0.353" stop-color="#fced32"/><stop offset="0.401" stop-color="#edfd35"/><stop offset="0.541" stop-color="#cefd3f"/><stop offset="0.781" stop-color="#a2fd60"/><stop offset="0.927" stop-color="#8efd72"/><stop offset="1" stop-color="#8bfd75"/></linearGradient><linearGradient id="cb" x2="0" y2="1"><stop offset="0" stop-color="#7e060e"/><stop offset="0.0156" stop-color="#90070f"/><stop offset="0.0312" stop-color="#a20811"/><stop offset="0.0469" stop-color="#b40913"/><stop offset="0.0625" stop-color="#c60a15"/><stop offset="0.0781" stop-color="#d70b17"/><stop offset="0.0938" stop-color="#e90c19"/><stop offset="0.1094" stop-color="#fb161b"/><stop offset="0.125" stop-color="#fc231c"/><stop offset="0.1406" stop-color="#fc311c"/><stop offset="0.1562" stop-color="#fc3f1d"/><stop offset="0.1719" stop-color="#fc4d1e"/><stop offset="0.1875" stop-color="#fc5c1f"/><stop offset="0.2031" stop-color="#fc6a21"/><stop offset="0.2188" stop-color="#fc7922"/><stop offset="0.2344" stop-color="#fc8824"/><stop offset="0.25" stop-color="#fd9626"/><stop offset="0.2656" stop-color="#fda528"/><stop offset="0.2812" stop-color="#fdb32a"/><stop offset="0.2969" stop-color="#fdc22c"/><stop offset="0.3125" stop-color="#fdd12e"/><stop offset="0.3281" stop-color="#fedf30"/><stop offset="0.3438" stop-color="#fbee32"/><stop offset="0.3594" stop-color="#eefd34"/><stop offset="0.375" stop-color="#e2fd36"/><stop offset="0.3906" stop-color="#d5fd3b"/><stop offset="0.4062" stop-color="#c9fd42"/><stop offset="0.4219" stop-color="#bcfd4a"/><stop offset="0.4375" stop-color="#b0fd54"/><stop offset="0.4531" stop-color="#a4fd5f"/><stop offset="0.4688" stop-color="#97fd69"/><stop offset="0.4844" stop-color="#8bfd75"/><stop offset="0.5" stop-color="#7ffd80"/><stop offset="0.5156" stop-color="#73fd8c"/><stop offset="0.5312" stop-color="#67fe98"/><stop offset="0.5469" stop-color="#5bfea4"/><stop offset="0.5625" stop-color="#50feb1"/><stop offset="0.5781" stop-color="#46febd"/><stop offset="0.5938" stop-color="#3cfec9"/><stop offset="0.6094" stop-color="#34fed6"/><stop offset="0.625" stop-color="#2dfee2"/><stop offset="0.6406" stop-color="#28efee"/><stop offset="0.6562" stop-color="#25dffa"/><stop offset="0.6719" stop-color="#23d0fd"/><stop offset="0.6875" stop-color="#20c0fd"/><stop offset="0.7031" stop-color="#1eb0fc"/><stop offset="0.7188" stop-color="#1ba1fc"/><stop offset="0.7344" stop-color="#1991fc"/><stop offset="0.75" stop-color="#1782fc"/><stop offset="0.7656" stop-color="#1573fb"/><stop offset="0.7812" stop-color="#1264fb"/><stop offset="0.7969" stop-color="#1055fb"/><stop offset="0.8125" stop-color="#0f47fb"/><stop offset="0.8281" stop-color="#0d3afb"/><stop offset="0.8438" stop-color="#0c2efb"/><stop offset="0.8594" stop-color="#0b27fb"/><stop offset="0.875" stop-color="#0b24fb"/><stop offset="0.8906" stop-color="#0b24fa"/><stop offset="0.9062" stop-color="#0a21e8"/><stop offset="0.9219" stop-color="#091fd7"/><stop offset="0.9375" stop-color="#091cc5"/><stop offset="0.9531" stop-color="#081ab3"/><stop offset="0.9688" stop-color="#0717a1"/><stop offset="0.9844" stop-color="#06158f"/><stop offset="1" stop-color="#06127e"/></linearGradient><filter id="bl" color-interpolation-filters="sRGB" x="-5%" y="-5%" width="110%" height="110%"><feGaussianBlur stdDeviation="0.7"/></filter><filter id="bh" color-interpolation-filters="sRGB" x="0" y="0" width="100%" height="100%"><feGaussianBlur stdDeviation="1.1"/><feComponentTransfer><feFuncA type="discrete" tableValues="1 1"/></feComponentTransfer></filter></defs><g filter="url(#bh)"><g id="q"><rect x="680" y="411" width="2.6" height="430" fill="url(#c0)"/><rect x="682" y="411" width="2.6" height="430" fill="url(#c1)"/><rect x="684" y="411" width="2.6" height="430" fill="url(#c2)"/><rect x="686" y="411" width="2.6" height="430" fill="url(#c3)"/><rect x="688" y="411" width="2.6" height="430" fill="url(#c4)"/><rect x="690" y="411" width="2.6" height="430" fill="url(#c5)"/><rect x="692" y="411" width="2.6" height="430" fill="url(#c6)"/><rect x="694" y="411" width="2.6" height="430" fill="url(#c7)"/><rect x="696" y="411" width="2.6" height="430" fill="url(#c8)"/><rect x="698" y="411" width="2.6" height="430" fill="url(#c9)"/><rect x="700" y="411" width="2.6" height="430" fill="url(#c10)"/><rect x="702" y="411" width="2.6" height="430" fill="url(#c11)"/><rect x="704" y="411" width="2.6" height="430" fill="url(#c12)"/><rect x="706" y="411" width="2.6" height="430" fill="url(#c13)"/><rect x="708" y="411" width="2.6" height="430" fill="url(#c14)"/><rect x="710" y="411" width="2.6" height="430" fill="url(#c15)"/><rect x="712" y="411" width="2.6" height="430" fill="url(#c16)"/><rect x="714" y="411" width="2.6" height="430" fill="url(#c17)"/><rect x="716" y="411" width="2.6" height="430" fill="url(#c18)"/><rect x="718" y="411" width="2.6" height="430" fill="url(#c19)"/><rect x="720" y="411" width="2.6" height="430" fill="url(#c20)"/><rect x="722" y="411" width="2.6" height="430" fill="url(#c21)"/><rect x="724" y="411" width="2.6" height="430" fill="url(#c22)"/><rect x="726" y="411" width="2.6" height="430" fill="url(#c23)"/><rect x="728" y="411" width="2.6" height="430" fill="url(#c24)"/><rect x="730" y="411" width="2.6" height="430" fill="url(#c25)"/><rect x="732" y="411" width="2.6" height="430" fill="url(#c26)"/><rect x="734" y="411" width="2.6" height="430" fill="url(#c27)"/><rect x="736" y="411" width="2.6" height="430" fill="url(#c28)"/><rect x="738" y="411" width="2.6" height="430" fill="url(#c29)"/><rect x="740" y="411" width="2.6" height="430" fill="url(#c30)"/><rect x="742" y="411" width="2.6" height="430" fill="url(#c31)"/><rect x="744" y="411" width="2.6" height="430" fill="url(#c32)"/><rect x="746" y="411" width="2.6" height="430" fill="url(#c33)"/><rect x="748" y="411" width="2.6" height="430" fill="url(#c34)"/><rect x="750" y="411" width="2.6" height="430" fill="url(#c35)"/><rect x="752" y="411" width="2.6" height="430" fill="url(#c36)"/><rect x="754" y="411" width="2.6" height="430" fill="url(#c37)"/><rect x="756" y="411" width="2.6" height="430" fill="url(#c38)"/><rect x="758" y="411" width="2.6" height="430" fill="url(#c39)"/><rect x="760" y="411" width="2.6" height="430" fill="url(#c40)"/><rect x="762" y="411" width="2.6" height="430" fill="url(#c41)"/><rect x="764" y="411" width="2.6" height="430" fill="url(#c42)"/><rect x="766" y="411" width="2.6" height="430" fill="url(#c43)"/><rect x="768" y="411" width="2.6" height="430" fill="url(#c44)"/><rect x="770" y="411" width="2.6" height="430" fill="url(#c45)"/><rect x="772" y="411" width="2.6" height="430" fill="url(#c46)"/><rect x="774" y="411" width="2.6" height="430" fill="url(#c47)"/><rect x="776" y="411" width="2.6" height="430" fill="url(#c48)"/><rect x="778" y="411" width="2.6" height="430" fill="url(#c49)"/><rect x="780" y="411" width="2.6" height="430" fill="url(#c50)"/><rect x="782" y="411" width="2.6" height="430" fill="url(#c51)"/><rect x="784" y="411" width="2.6" height="430" fill="url(#c52)"/><rect x="786" y="411" width="2.6" height="430" fill="url(#c53)"/><rect x="788" y="411" width="2.6" height="430" fill="url(#c54)"/><rect x="790" y="411" width="2.6" height="430" fill="url(#c55)"/><rect x="792" y="411" width="2.6" height="430" fill="url(#c56)"/><rect x="794" y="411" width="2.6" height="430" fill="url(#c57)"/><rect x="796" y="411" width="2.6" height="430" fill="url(#c58)"/><rect x="798" y="411" width="2.6" height="430" fill="url(#c59)"/><rect x="800" y="411" width="2.6" height="430" fill="url(#c60)"/><rect x="802" y="411" width="2.6" height="430" fill="url(#c61)"/><rect x="804" y="411" width="2.6" height="430" fill="url(#c62)"/><rect x="806" y="411" width="2.6" height="430" fill="url(#c63)"/><rect x="808" y="411" width="2.6" height="430" fill="url(#c64)"/><rect x="810" y="411" width="2.6" height="430" fill="url(#c65)"/><rect x="812" y="411" width="2.6" height="430" fill="url(#c66)"/><rect x="814" y="411" width="2.6" height="430" fill="url(#c67)"/><rect x="816" y="411" width="2.6" height="430" fill="url(#c68)"/><rect x="818" y="411" width="2.6" height="430" fill="url(#c69)"/><rect x="820" y="411" width="2.6" height="430" fill="url(#c70)"/><rect x="822" y="411" width="2.6" height="430" fill="url(#c71)"/><rect x="824" y="411" width="2.6" height="430" fill="url(#c72)"/><rect x="826" y="411" width="2.6" height="430" fill="url(#c73)"/><rect x="828" y="411" width="2.6" height="430" fill="url(#c74)"/><rect x="830" y="411" width="2.6" height="430" fill="url(#c75)"/><rect x="832" y="411" width="2.6" height="430" fill="url(#c76)"/><rect x="834" y="411" width="2.6" height="430" fill="url(#c77)"/><rect x="836" y="411" width="2.6" height="430" fill="url(#c78)"/><rect x="838" y="411" width="2.6" height="430" fill="url(#c79)"/><rect x="840" y="411" width="2.6" height="430" fill="url(#c80)"/><rect x="842" y="411" width="2.6" height="430" fill="url(#c81)"/><rect x="844" y="411" width="2.6" height="430" fill="url(#c82)"/><rect x="846" y="411" width="2.6" height="430" fill="url(#c83)"/><rect x="848" y="411" width="2.6" height="430" fill="url(#c84)"/><rect x="850" y="411" width="2.6" height="430" fill="url(#c85)"/><rect x="852" y="411" width="2.6" height="430" fill="url(#c86)"/><rect x="854" y="411" width="2.6" height="430" fill="url(#c87)"/><rect x="856" y="411" width="2.6" height="430" fill="url(#c88)"/><rect x="858" y="411" width="2.6" height="430" fill="url(#c89)"/><rect x="860" y="411" width="2.6" height="430" fill="url(#c90)"/><rect x="862" y="411" width="2.6" height="430" fill="url(#c91)"/><rect x="864" y="411" width="2.6" height="430" fill="url(#c92)"/><rect x="866" y="411" width="2.6" height="430" fill="url(#c93)"/><rect x="868" y="411" width="2.6" height="430" fill="url(#c94)"/><rect x="870" y="411" width="2.6" height="430" fill="url(#c95)"/><rect x="872" y="411" width="2.6" height="430" fill="url(#c96)"/><rect x="874" y="411" width="2.6" height="430" fill="url(#c97)"/><rect x="876" y="411" width="2.6" height="430" fill="url(#c98)"/><rect x="878" y="411" width="2.6" height="430" fill="url(#c99)"/><rect x="880" y="411" width="2.6" height="430" fill="url(#c100)"/><rect x="882" y="411" width="2.6" height="430" fill="url(#c101)"/><rect x="884" y="411" width="2.6" height="430" fill="url(#c102)"/><rect x="886" y="411" width="2.6" height="430" fill="url(#c103)"/><rect x="888" y="411" width="2.6" height="430" fill="url(#c104)"/><rect x="890" y="411" width="2.6" height="430" fill="url(#c105)"/><rect x="892" y="411" width="2.6" height="430" fill="url(#c106)"/><rect x="894" y="411" width="2.6" height="430" fill="url(#c107)"/><rect x="896" y="411" width="2.6" height="430" fill="url(#c108)"/><rect x="898" y="411" width="2.6" height="430" fill="url(#c109)"/><rect x="900" y="411" width="2.6" height="430" fill="url(#c110)"/><rect x="902" y="411" width="2.6" height="430" fill="url(#c111)"/><rect x="904" y="411" width="2.6" height="430" fill="url(#c112)"/><rect x="906" y="411" width="2.6" height="430" fill="url(#c113)"/><rect x="908" y="411" width="2.6" height="430" fill="url(#c114)"/><rect x="910" y="411" width="2.6" height="430" fill="url(#c115)"/><rect x="912" y="411" width="2.6" height="430" fill="url(#c116)"/><rect x="914" y="411" width="2.6" height="430" fill="url(#c117)"/><rect x="916" y="411" width="2.6" height="430" fill="url(#c118)"/><rect x="918" y="411" width="2.6" height="430" fill="url(#c119)"/><rect x="920" y="411" width="2.6" height="430" fill="url(#c120)"/><rect x="922" y="411" width="2.6" height="430" fill="url(#c121)"/><rect x="924" y="411" width="2.6" height="430" fill="url(#c122)"/><rect x="926" y="411" width="2.6" height="430" fill="url(#c123)"/><rect x="928" y="411" width="2.6" height="430" fill="url(#c124)"/><rect x="930" y="411" width="2.6" height="430" fill="url(#c125)"/><rect x="932" y="411" width="2.6" height="430" fill="url(#c126)"/><rect x="934" y="411" width="2.6" height="430" fill="url(#c127)"/><rect x="936" y="411" width="2.6" height="430" fill="url(#c128)"/><rect x="938" y="411" width="2.6" height="430" fill="url(#c129)"/><rect x="940" y="411" width="2.6" height="430" fill="url(#c130)"/><rect x="942" y="411" width="2.6" height="430" fill="url(#c131)"/><rect x="944" y="411" width="2.6" height="430" fill="url(#c132)"/><rect x="946" y="411" width="2.6" height="430" fill="url(#c133)"/><rect x="948" y="411" width="2.6" height="430" fill="url(#c134)"/><rect x="950" y="411" width="2.6" height="430" fill="url(#c135)"/><rect x="952" y="411" width="2.6" height="430" fill="url(#c136)"/><rect x="954" y="411" width="2.6" height="430" fill="url(#c137)"/><rect x="956" y="411" width="2.6" height="430" fill="url(#c138)"/><rect x="958" y="411" width="2.6" height="430" fill="url(#c139)"/><rect x="960" y="411" width="2" height="430" fill="url(#c140)"/></g><use href="#q" transform="translate(1924,0) scale(-1,1)"/><use href="#q" transform="translate(0,1682) scale(1,-1)"/><use href="#q" transform="translate(1924,1682) scale(-1,-1)"/></g><g shape-rendering="crispEdges"><rect x="680" y="411" width="564" height="860" fill="none" stroke="#000" stroke-width="2"/><path d="M812 1270v-9M812 412v9M962 1270v-9M962 412v9M1112 1270v-9M1112 412v9M681 540h9M1243 540h-9M681 691h9M1243 691h-9M681 841h9M1243 841h-9M681 991h9M1243 991h-9M681 1141h9M1243 1141h-9" stroke="#000" stroke-opacity=".6" stroke-width="2" fill="none"/><rect x="1330" y="411" width="44" height="860" fill="url(#cb)" stroke="#000" stroke-width="2"/><path d="M1373 626h-9M1373 841h-9M1373 1056h-9" stroke="#000" stroke-opacity=".6" stroke-width="2" fill="none"/></g><g filter="url(#bl)"><path d="M831.4 766.500l25 25M856.400 766.500l-25 25" stroke="#000" stroke-width="2" stroke-opacity=".55" fill="none"/><g font-family="DejaVu Sans, sans-serif" font-size="33" fill="#000" stroke="#f2f1ef" stroke-width=".5" text-anchor="end"><text x="668.6" y="547.6">0.100</text><text x="668.6" y="698.1">0.050</text><text x="668.6" y="848.6">0.000</text><text x="671.3" y="999.1">-0.050</text><text x="671.3" y="1149.6">-0.100</text></g><g font-family="DejaVu Sans, sans-serif" font-size="33" fill="#000" stroke="#f2f1ef" stroke-width=".5" text-anchor="middle"><text transform="translate(815.2,1332) rotate(-45)">-0.050</text><text transform="translate(965.5,1332) rotate(-45)">0.000</text><text transform="translate(1115.8,1332) rotate(-45)">0.050</text></g><g font-family="DejaVu Sans, sans-serif" font-size="56.3" fill="#000" text-anchor="middle"><text x="961.5" y="1432">z [m]</text><text transform="translate(537,842.5) rotate(-90)">y [m]</text><text transform="translate(1627.5,841) rotate(-90)">B [mT]</text></g><g font-family="DejaVu Sans, sans-serif" font-size="33" fill="#000" stroke="#f2f1ef" stroke-width=".5"><text x="1382.5" y="418">≥4.15e+00</text><text x="1382.5" y="634">3.96e+00</text><text x="1382.5" y="849.2">3.77e+00</text><text x="1382.5" y="1064">3.58e+00</text><text x="1382.5" y="1277">≤3.39e+00</text></g></g></svg>
<div class="btn" style="left:142px;top:1474px;width:80px;height:80px"></div>
<div class="btn" style="left:242px;top:1474px;width:80px;height:80px"></div>
<svg style="left:163px;top:1494px" width="39" height="39" viewBox="0 0 39 39"><defs><linearGradient id="fl" x2="0" y2="1"><stop offset="0" stop-color="#f0f0ee"/><stop offset=".4" stop-color="#fdfdfd"/><stop offset="1" stop-color="#fff"/></linearGradient><linearGradient id="fs" x2="1" y2="1"><stop offset="0" stop-color="#e9e9e7"/><stop offset=".55" stop-color="#b9bab5"/><stop offset="1" stop-color="#dfe0dc"/></linearGradient><linearGradient id="fb" x2="0" y2="1"><stop offset="0" stop-color="#3c3d3b"/><stop offset="1" stop-color="#565755"/></linearGradient></defs>
<path d="M2 0h35a2 2 0 0 1 2 2v35a2 2 0 0 1-2 2H4.5L0 34.5V2a2 2 0 0 1 2-2z" fill="url(#fb)"/>
<path d="M1 1.6h37v35.8H5L1 33.8z" fill="none" stroke="#6b6c69" stroke-width="1" opacity=".55"/>
<rect x="4.8" y="0" width="29.6" height="22" fill="url(#fl)"/>
<rect x="4.8" y="0" width="29.6" height="3.6" fill="#5e8fce"/><rect x="4.8" y="0" width="29.6" height="1" fill="#3f6fb0"/>
<path d="M5.5 9.5h28.2M5.5 16.5h28.2" stroke="#c3c4bc" stroke-width="1"/>
<rect x="2" y="3" width="1.6" height="1.6" fill="#151515"/><rect x="35.4" y="3" width="1.6" height="1.6" fill="#151515"/>
<rect x="8" y="25.5" width="19.6" height="13" fill="url(#fs)" stroke="#8d8e89" stroke-width=".8"/>
<rect x="11.2" y="27.6" width="5.4" height="7.6" fill="#4b4c4a"/>
<rect x="28.6" y="25.5" width="5.6" height="13" fill="#4a4b49" opacity=".7"/>
</svg>
<svg style="left:258px;top:1496px" width="50" height="40" viewBox="0 0 50 40"><defs><linearGradient id="ug" x2="0" y2="1"><stop offset="0" stop-color="#fbf29a"/><stop offset=".4" stop-color="#f4e04f"/><stop offset="1" stop-color="#e8c81c"/></linearGradient><linearGradient id="uf" gradientUnits="userSpaceOnUse" x1="26" x2="34" y1="0" y2="0"><stop offset="0" stop-color="#fff" stop-opacity="0"/><stop offset="1" stop-color="#fff"/></linearGradient><mask id="um"><rect width="50" height="40" fill="#fff"/><rect x="20" y="25.500" width="14" height="14" fill="#000"/><rect x="26" y="25.500" width="8" height="14" fill="url(#uf)"/></mask></defs>
<g mask="url(#um)"><path d="M19.500 5v7H35c7 0 12 5 12 12s-5 11.500-12 11.500h-8.500V29H35c3 0 5-2 5-4.500 0-2-2-3.500-5-3.500H19.500v7.500q-.2 3-3 1.100L2.300 18q-1.300-1.500 0-3L16.500 3.400q2.800-1.800 3 1.600z" fill="none" stroke="#fff" stroke-opacity=".55" stroke-width="3.600" stroke-linejoin="round"/>
<path d="M19.500 5v7H35c7 0 12 5 12 12s-5 11.500-12 11.500h-8.500V29H35c3 0 5-2 5-4.500 0-2-2-3.500-5-3.500H19.500v7.500q-.2 3-3 1.100L2.300 18q-1.300-1.500 0-3L16.500 3.400q2.800-1.800 3 1.600z" fill="url(#ug)" stroke="#c7a50e" stroke-width="1.500" stroke-linejoin="round"/></g>
</svg>
<div class="btn" style="left:342px;top:1474px;width:270px;height:80px;line-height:73px">Show coils</div>
<div class="lab" style="left:641px;top:1498px">Bmin [mT] =</div>
<div class="inp" style="left:794px;top:1474px;width:336px;height:80px;line-height:74px;padding-left:15px">3.39E+00</div>
<div class="lab" style="left:1149px;top:1498px">Bmax [mT] =</div>
<div class="inp" style="left:1308px;top:1474px;width:336px;height:80px;line-height:74px">4.15E+00</div>
<div class="btn" style="left:1664px;top:1474px;width:270px;height:80px;line-height:73px;padding-right:4px">Apply</div>
<div class="lab" style="left:112px;width:1859px;text-align:center;top:1570px">Coordinates: z = -0.039; y = 0.021; B = 3.80E+00 mT</div>
</body></html>
